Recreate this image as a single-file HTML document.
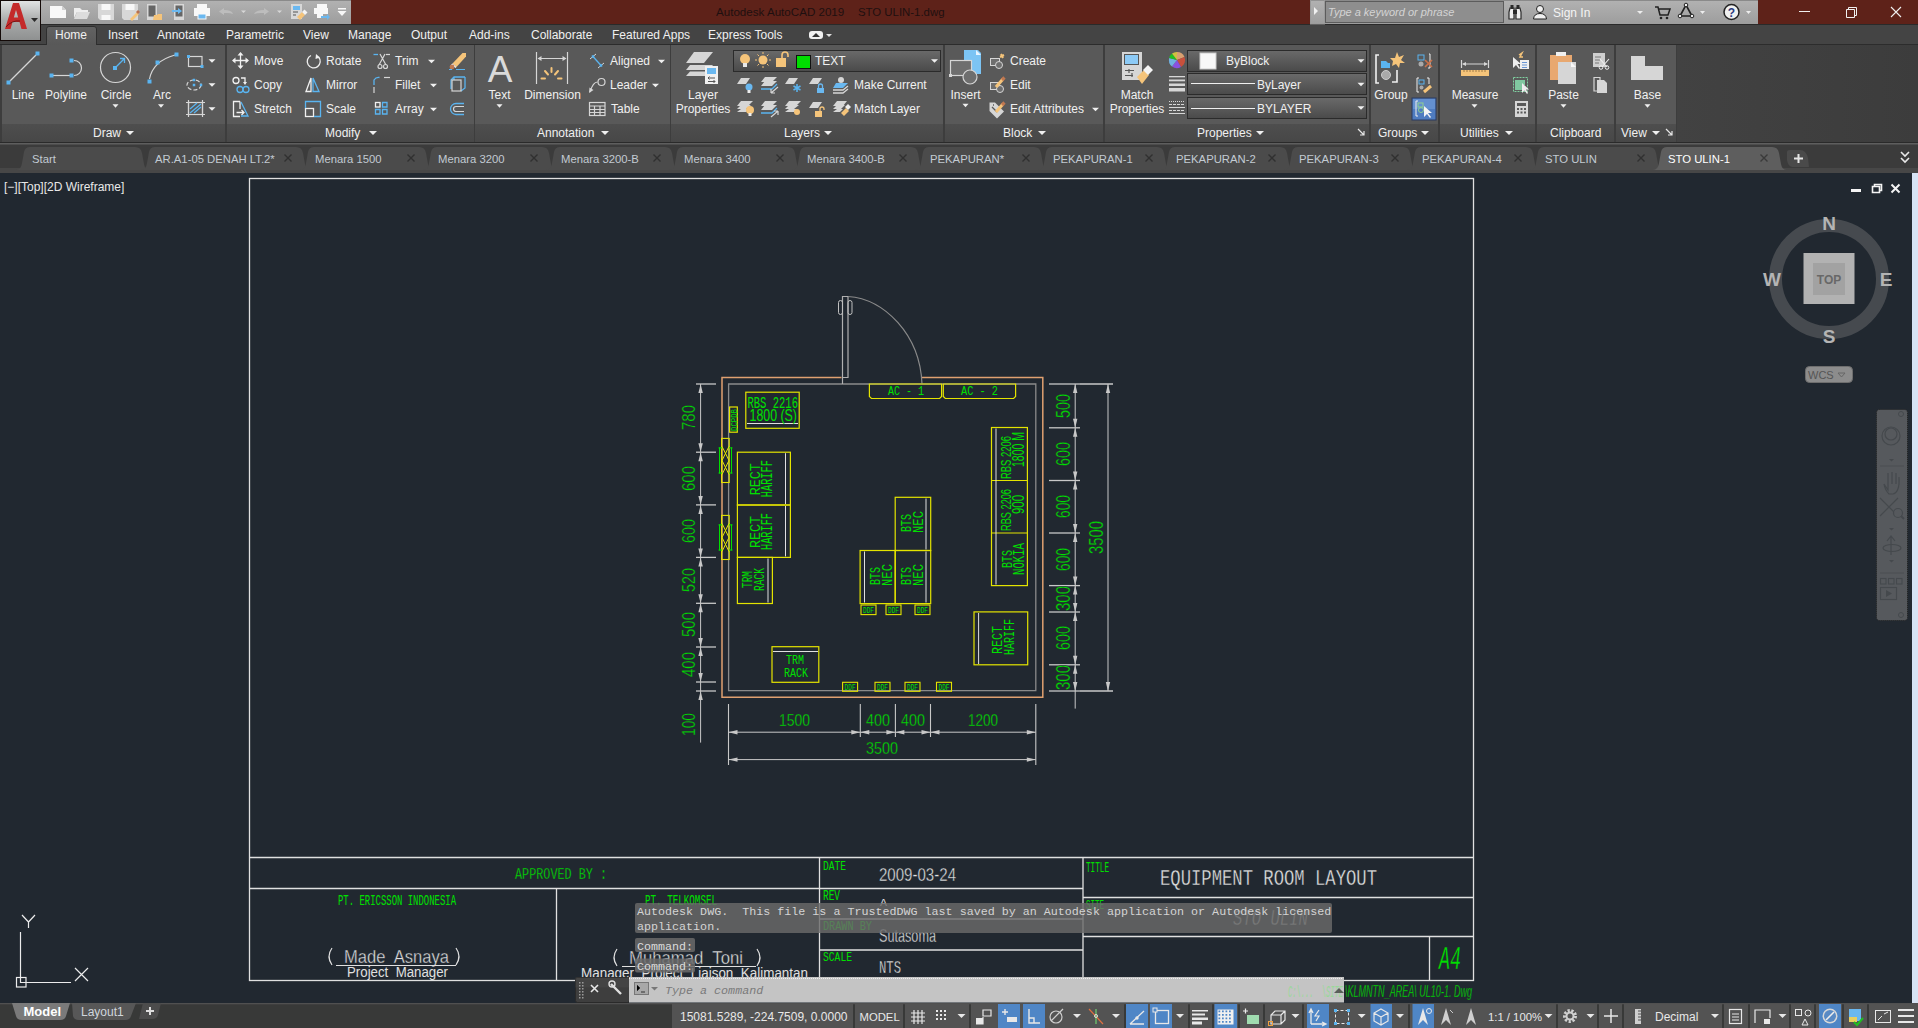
<!DOCTYPE html>
<html><head><meta charset="utf-8">
<style>
*{margin:0;padding:0}
html,body{width:1918px;height:1028px;overflow:hidden;background:#212830;font-family:"Liberation Sans",sans-serif}
svg{position:absolute;left:0;top:0;display:block}

</style></head><body>
<svg width="1918" height="1028" viewBox="0 0 1918 1028" font-family="Liberation Sans">
<g font-family="Liberation Mono">
<g stroke="#e0e0e0" stroke-width="1.3" fill="none">
<rect x="249.5" y="178.5" width="1224" height="802"/>
<path d="M249.5 857.5 H1473.5 M249.5 888.5 H819.5 M556.5 888.5 V980.5 M819.5 857.5 V980.5 M819.5 888.5 H1083 M819.5 919 H1083 M819.5 950 H1083 M1083 857.5 V980.5 M1083 897.5 H1473.5 M1083 936.5 H1473.5 M1429.5 936.5 V980.5"/>
</g>
<text x="515" y="879" font-size="17.14" fill="#00e000" font-family="Liberation Mono" textLength="92" lengthAdjust="spacingAndGlyphs" xml:space="preserve" stroke="#212830" stroke-width="0.35">APPROVED BY :</text>
<text x="338" y="905" font-size="14.29" fill="#00e000" font-family="Liberation Mono" textLength="118" lengthAdjust="spacingAndGlyphs" xml:space="preserve" stroke="#212830" stroke-width="0">PT. ERICSSON INDONESIA</text>
<text x="645" y="905" font-size="14.29" fill="#00e000" font-family="Liberation Mono" textLength="72" lengthAdjust="spacingAndGlyphs" xml:space="preserve" stroke="#212830" stroke-width="0">PT. TELKOMSEL</text>
<text x="344" y="962.5" font-size="17.86" fill="#e0e0e0" font-family="Liberation Sans" textLength="105" lengthAdjust="spacingAndGlyphs" xml:space="preserve" stroke="#212830" stroke-width="0.35">Made  Asnaya</text>
<path d="M332 948 Q326 956.5 332 965 M456 948 Q462 956.5 456 965" stroke="#e0e0e0" stroke-width="1.2" fill="none"/>
<line x1="336" y1="965.5" x2="456" y2="965.5" stroke="#e0e0e0" stroke-width="1"/>
<text x="347" y="977" font-size="14.29" fill="#e0e0e0" font-family="Liberation Sans" textLength="101" lengthAdjust="spacingAndGlyphs" xml:space="preserve" stroke="#212830" stroke-width="0">Project  Manager</text>
<text x="629" y="963.5" font-size="17.86" fill="#e0e0e0" font-family="Liberation Sans" textLength="114" lengthAdjust="spacingAndGlyphs" xml:space="preserve" stroke="#212830" stroke-width="0.35">Muhamad  Toni</text>
<path d="M617 949 Q611 957.5 617 966 M757 949 Q763 957.5 757 966" stroke="#e0e0e0" stroke-width="1.2" fill="none"/>
<line x1="622" y1="966.5" x2="756" y2="966.5" stroke="#e0e0e0" stroke-width="1"/>
<text x="581" y="978" font-size="14.29" fill="#e0e0e0" font-family="Liberation Sans" textLength="227" lengthAdjust="spacingAndGlyphs" xml:space="preserve" stroke="#212830" stroke-width="0">Manager  Project  Liaison  Kalimantan</text>
<text x="823" y="870" font-size="12.86" fill="#00e000" font-family="Liberation Mono" textLength="23" lengthAdjust="spacingAndGlyphs" xml:space="preserve" stroke="#212830" stroke-width="0">DATE</text>
<text x="879" y="881" font-size="18.57" fill="#e0e0e0" font-family="Liberation Sans" textLength="77" lengthAdjust="spacingAndGlyphs" xml:space="preserve" stroke="#212830" stroke-width="0.35">2009-03-24</text>
<text x="823" y="900" font-size="14.29" fill="#00e000" font-family="Liberation Mono" textLength="17" lengthAdjust="spacingAndGlyphs" xml:space="preserve" stroke="#212830" stroke-width="0">REV</text>
<text x="880" y="906" font-size="10.00" fill="#e0e0e0" font-family="Liberation Mono" textLength="7" lengthAdjust="spacingAndGlyphs" xml:space="preserve" stroke="#212830" stroke-width="0">A</text>
<text x="823" y="930" font-size="12.86" fill="#00e000" font-family="Liberation Mono" textLength="49" lengthAdjust="spacingAndGlyphs" xml:space="preserve" stroke="#212830" stroke-width="0">DRAWN BY</text>
<text x="879" y="942" font-size="18.57" fill="#e0e0e0" font-family="Liberation Sans" textLength="57" lengthAdjust="spacingAndGlyphs" xml:space="preserve" stroke="#212830" stroke-width="0.35">Sutasoma</text>
<text x="823" y="961" font-size="12.86" fill="#00e000" font-family="Liberation Mono" textLength="29" lengthAdjust="spacingAndGlyphs" xml:space="preserve" stroke="#212830" stroke-width="0">SCALE</text>
<text x="879" y="973" font-size="18.57" fill="#e0e0e0" font-family="Liberation Mono" textLength="22" lengthAdjust="spacingAndGlyphs" xml:space="preserve" stroke="#212830" stroke-width="0.35">NTS</text>
<text x="1086" y="872" font-size="14.29" fill="#00e000" font-family="Liberation Mono" textLength="23" lengthAdjust="spacingAndGlyphs" xml:space="preserve" stroke="#212830" stroke-width="0">TITLE</text>
<text x="1160" y="885" font-size="22.86" fill="#e0e0e0" font-family="Liberation Mono" textLength="217" lengthAdjust="spacingAndGlyphs" xml:space="preserve" stroke="#212830" stroke-width="0.35">EQUIPMENT ROOM LAYOUT</text>
<text x="1086" y="909" font-size="12.86" fill="#00e000" font-family="Liberation Mono" textLength="18" lengthAdjust="spacingAndGlyphs" xml:space="preserve" stroke="#212830" stroke-width="0">SITE</text>
<text x="1233" y="925" font-size="21.43" fill="#b8b8b8" font-family="Liberation Mono" textLength="75" lengthAdjust="spacingAndGlyphs" xml:space="preserve" stroke="#212830" stroke-width="0.35" font-style="italic">STO ULIN</text>
<text x="1439" y="969" font-size="32.86" fill="#00e000" font-family="Liberation Mono" textLength="22" lengthAdjust="spacingAndGlyphs" xml:space="preserve" stroke="#212830" stroke-width="0.35" font-style="italic">A4</text>
<text x="1345" y="997" font-size="17.14" fill="#00e000" font-family="Liberation Sans" textLength="127" lengthAdjust="spacingAndGlyphs" xml:space="preserve" stroke="#212830" stroke-width="0.35" font-style="italic">\KLMNTN_AREA\ UL10-1. Dwg</text>
<path d="M841.5 377.5 H722 V697.2 H1042.8 V377.5 H922" stroke="#e0a070" stroke-width="1.5" fill="none"/>
<path d="M842 384 H728.6 V690.7 H1035.8 V384 H842" stroke="#8a8a8a" stroke-width="1.3" fill="none"/>
<path d="M842.5 384 V296.5 H848 V377.5 H842.5" fill="none" stroke="#b0b0b0" stroke-width="1.2"/>
<rect x="838.5" y="300.5" width="4" height="14" rx="2" fill="none" stroke="#c0c0c0" stroke-width="1"/><rect x="848" y="300.5" width="4" height="14" rx="2" fill="none" stroke="#c0c0c0" stroke-width="1"/>
<path d="M848 296.5 C884 299 920 334 922 384" stroke="#8a8a8a" stroke-width="1.2" fill="none"/>
<path d="M869.4 384 V396.5 L871.4 398.5 H939.6 L941.6 396.5 V384 Z" fill="none" stroke="#e4e400" stroke-width="1.2"/>
<path d="M943.3 384 V396.5 L945.3 398.5 H1013.6 L1015.6 396.5 V384 Z" fill="none" stroke="#e4e400" stroke-width="1.2"/>
<text x="888" y="395" font-size="13.57" fill="#00e000" font-family="Liberation Mono" textLength="36" lengthAdjust="spacingAndGlyphs" xml:space="preserve" stroke="#212830" stroke-width="0">AC - 1</text>
<text x="961" y="395" font-size="13.57" fill="#00e000" font-family="Liberation Mono" textLength="37" lengthAdjust="spacingAndGlyphs" xml:space="preserve" stroke="#212830" stroke-width="0">AC - 2</text>
<rect x="745.8" y="392.2" width="53.40000000000009" height="36.10000000000002" fill="none" stroke="#e4e400" stroke-width="1.2"/>
<line x1="747" y1="423.5" x2="798" y2="423.5" stroke="#e0e0e0" stroke-width="1"/>
<text x="747.5" y="408" font-size="15.71" fill="#00e000" font-family="Liberation Mono" textLength="50.5" lengthAdjust="spacingAndGlyphs" xml:space="preserve" stroke="#212830" stroke-width="0">RBS 2216</text>
<text x="749.5" y="420.5" font-size="15.71" fill="#00e000" font-family="Liberation Sans" textLength="47.5" lengthAdjust="spacingAndGlyphs" xml:space="preserve" stroke="#212830" stroke-width="0">1800 (S)</text>
<rect x="729.6" y="407" width="7.699999999999932" height="25.19999999999999" fill="none" stroke="#e4e400" stroke-width="1.2"/>
<text transform="translate(736.5,431) rotate(-90)" x="0" y="0" font-size="8.57" fill="#00e000" font-family="Liberation Mono" textLength="22" lengthAdjust="spacingAndGlyphs" stroke="#212830" stroke-width="0">DCPDB</text>
<rect x="721.6" y="438.4" width="7.600000000000023" height="44.10000000000002" fill="none" stroke="#e4e400" stroke-width="1.1"/>
<path d="M722 446.4 L729 460.45 L722 474.5 M729 446.4 L722 460.45 L729 474.5" stroke="#e4e400" stroke-width="1" fill="none"/>
<path d="M719.5 447.4 V473.5 M731.5 447.4 V473.5 M718.5 447.9 H722 M718.5 473.0 H722 M729 447.9 H732.5 M729 473.0 H732.5" stroke="#00e000" stroke-width="1" fill="none"/>
<rect x="721.6" y="515.4" width="7.600000000000023" height="44.10000000000002" fill="none" stroke="#e4e400" stroke-width="1.1"/>
<path d="M722 523.4 L729 537.45 L722 551.5 M729 523.4 L722 537.45 L729 551.5" stroke="#e4e400" stroke-width="1" fill="none"/>
<path d="M719.5 524.4 V550.5 M731.5 524.4 V550.5 M718.5 524.9 H722 M718.5 550.0 H722 M729 524.9 H732.5 M729 550.0 H732.5" stroke="#00e000" stroke-width="1" fill="none"/>
<rect x="737.4" y="452.2" width="53.0" height="52.80000000000001" fill="none" stroke="#e4e400" stroke-width="1.2"/>
<line x1="785.5" y1="453.2" x2="785.5" y2="504" stroke="#e0e0e0" stroke-width="1"/>
<text transform="translate(760,495.2) rotate(-90)" x="0" y="0" font-size="14.29" fill="#00e000" font-family="Liberation Mono" textLength="32.0" lengthAdjust="spacingAndGlyphs" stroke="#212830" stroke-width="0">RECT</text>
<text transform="translate(772,497.2) rotate(-90)" x="0" y="0" font-size="15.71" fill="#00e000" font-family="Liberation Mono" textLength="37.0" lengthAdjust="spacingAndGlyphs" stroke="#212830" stroke-width="0">HARIFF</text>
<rect x="737.4" y="505" width="53.0" height="52.39999999999998" fill="none" stroke="#e4e400" stroke-width="1.2"/>
<line x1="785.5" y1="506" x2="785.5" y2="556.4" stroke="#e0e0e0" stroke-width="1"/>
<text transform="translate(760,548) rotate(-90)" x="0" y="0" font-size="14.29" fill="#00e000" font-family="Liberation Mono" textLength="32" lengthAdjust="spacingAndGlyphs" stroke="#212830" stroke-width="0">RECT</text>
<text transform="translate(772,550) rotate(-90)" x="0" y="0" font-size="15.71" fill="#00e000" font-family="Liberation Mono" textLength="37" lengthAdjust="spacingAndGlyphs" stroke="#212830" stroke-width="0">HARIFF</text>
<rect x="737.4" y="557.4" width="35.0" height="46.10000000000002" fill="none" stroke="#e4e400" stroke-width="1.2"/>
<line x1="768" y1="558.5" x2="768" y2="602.5" stroke="#e0e0e0" stroke-width="1"/>
<text transform="translate(752,588) rotate(-90)" x="0" y="0" font-size="14.29" fill="#00e000" font-family="Liberation Mono" textLength="17" lengthAdjust="spacingAndGlyphs" stroke="#212830" stroke-width="0">TRM</text>
<text transform="translate(764,591) rotate(-90)" x="0" y="0" font-size="14.29" fill="#00e000" font-family="Liberation Mono" textLength="23" lengthAdjust="spacingAndGlyphs" stroke="#212830" stroke-width="0">RACK</text>
<rect x="895.2" y="497.3" width="35.5" height="53.19999999999999" fill="none" stroke="#e4e400" stroke-width="1.2"/>
<line x1="926" y1="498.5" x2="926" y2="549.5" stroke="#e0e0e0" stroke-width="1"/>
<text transform="translate(911,532) rotate(-90)" x="0" y="0" font-size="14.29" fill="#00e000" font-family="Liberation Mono" textLength="18" lengthAdjust="spacingAndGlyphs" stroke="#212830" stroke-width="0">BTS</text>
<text transform="translate(923,533) rotate(-90)" x="0" y="0" font-size="14.29" fill="#00e000" font-family="Liberation Mono" textLength="22" lengthAdjust="spacingAndGlyphs" stroke="#212830" stroke-width="0">NEC</text>
<rect x="860.1" y="550.5" width="35.10000000000002" height="53.10000000000002" fill="none" stroke="#e4e400" stroke-width="1.2"/>
<line x1="864.5" y1="551.5" x2="864.5" y2="602.5" stroke="#e0e0e0" stroke-width="1"/>
<text transform="translate(880,585) rotate(-90)" x="0" y="0" font-size="14.29" fill="#00e000" font-family="Liberation Mono" textLength="18" lengthAdjust="spacingAndGlyphs" stroke="#212830" stroke-width="0">BTS</text>
<text transform="translate(892,586) rotate(-90)" x="0" y="0" font-size="14.29" fill="#00e000" font-family="Liberation Mono" textLength="22" lengthAdjust="spacingAndGlyphs" stroke="#212830" stroke-width="0">NEC</text>
<rect x="895.2" y="550.5" width="35.5" height="53.10000000000002" fill="none" stroke="#e4e400" stroke-width="1.2"/>
<line x1="926" y1="551.5" x2="926" y2="602.5" stroke="#e0e0e0" stroke-width="1"/>
<text transform="translate(911,585) rotate(-90)" x="0" y="0" font-size="14.29" fill="#00e000" font-family="Liberation Mono" textLength="18" lengthAdjust="spacingAndGlyphs" stroke="#212830" stroke-width="0">BTS</text>
<text transform="translate(923,586) rotate(-90)" x="0" y="0" font-size="14.29" fill="#00e000" font-family="Liberation Mono" textLength="22" lengthAdjust="spacingAndGlyphs" stroke="#212830" stroke-width="0">NEC</text>
<rect x="861" y="605" width="15" height="9.600000000000023" fill="none" stroke="#e4e400" stroke-width="1.1"/>
<text x="863" y="613" font-size="9.29" fill="#00e000" font-family="Liberation Mono" textLength="11" lengthAdjust="spacingAndGlyphs" xml:space="preserve" stroke="#212830" stroke-width="0">DDF</text>
<rect x="886" y="605" width="15" height="9.600000000000023" fill="none" stroke="#e4e400" stroke-width="1.1"/>
<text x="888" y="613" font-size="9.29" fill="#00e000" font-family="Liberation Mono" textLength="11" lengthAdjust="spacingAndGlyphs" xml:space="preserve" stroke="#212830" stroke-width="0">DDF</text>
<rect x="915" y="605" width="15" height="9.600000000000023" fill="none" stroke="#e4e400" stroke-width="1.1"/>
<text x="917" y="613" font-size="9.29" fill="#00e000" font-family="Liberation Mono" textLength="11" lengthAdjust="spacingAndGlyphs" xml:space="preserve" stroke="#212830" stroke-width="0">DDF</text>
<rect x="842.6" y="682.3" width="15.0" height="9.0" fill="none" stroke="#e4e400" stroke-width="1.1"/>
<text x="844.6" y="690" font-size="9.29" fill="#00e000" font-family="Liberation Mono" textLength="11.0" lengthAdjust="spacingAndGlyphs" xml:space="preserve" stroke="#212830" stroke-width="0">DDF</text>
<rect x="875" y="682.3" width="15" height="9.0" fill="none" stroke="#e4e400" stroke-width="1.1"/>
<text x="877" y="690" font-size="9.29" fill="#00e000" font-family="Liberation Mono" textLength="11" lengthAdjust="spacingAndGlyphs" xml:space="preserve" stroke="#212830" stroke-width="0">DDF</text>
<rect x="905" y="682.3" width="15" height="9.0" fill="none" stroke="#e4e400" stroke-width="1.1"/>
<text x="907" y="690" font-size="9.29" fill="#00e000" font-family="Liberation Mono" textLength="11" lengthAdjust="spacingAndGlyphs" xml:space="preserve" stroke="#212830" stroke-width="0">DDF</text>
<rect x="936.5" y="682.3" width="15.0" height="9.0" fill="none" stroke="#e4e400" stroke-width="1.1"/>
<text x="938.5" y="690" font-size="9.29" fill="#00e000" font-family="Liberation Mono" textLength="11.0" lengthAdjust="spacingAndGlyphs" xml:space="preserve" stroke="#212830" stroke-width="0">DDF</text>
<rect x="991.5" y="427.5" width="35.90000000000009" height="158.10000000000002" fill="none" stroke="#e4e400" stroke-width="1.2"/>
<line x1="991.5" y1="480.5" x2="1027.4" y2="480.5" stroke="#e4e400" stroke-width="1.2"/>
<line x1="991.5" y1="533" x2="1027.4" y2="533" stroke="#e4e400" stroke-width="1.2"/>
<line x1="996" y1="428.5" x2="996" y2="584.5" stroke="#e0e0e0" stroke-width="1"/>
<text transform="translate(1011,479) rotate(-90)" x="0" y="0" font-size="14.29" fill="#00e000" font-family="Liberation Sans" textLength="43" lengthAdjust="spacingAndGlyphs" stroke="#212830" stroke-width="0">RBS 2206</text>
<text transform="translate(1024,467) rotate(-90)" x="0" y="0" font-size="15.71" fill="#00e000" font-family="Liberation Sans" textLength="35" lengthAdjust="spacingAndGlyphs" stroke="#212830" stroke-width="0">1800 M</text>
<text transform="translate(1011,531) rotate(-90)" x="0" y="0" font-size="14.29" fill="#00e000" font-family="Liberation Sans" textLength="42" lengthAdjust="spacingAndGlyphs" stroke="#212830" stroke-width="0">RBS 2206</text>
<text transform="translate(1024,514) rotate(-90)" x="0" y="0" font-size="15.71" fill="#00e000" font-family="Liberation Sans" textLength="19" lengthAdjust="spacingAndGlyphs" stroke="#212830" stroke-width="0">900</text>
<text transform="translate(1012,568) rotate(-90)" x="0" y="0" font-size="14.29" fill="#00e000" font-family="Liberation Mono" textLength="18" lengthAdjust="spacingAndGlyphs" stroke="#212830" stroke-width="0">BTS</text>
<text transform="translate(1024,575) rotate(-90)" x="0" y="0" font-size="15.71" fill="#00e000" font-family="Liberation Mono" textLength="32" lengthAdjust="spacingAndGlyphs" stroke="#212830" stroke-width="0">NOKIA</text>
<rect x="974" y="611.9" width="53.700000000000045" height="52.89999999999998" fill="none" stroke="#e4e400" stroke-width="1.2"/>
<line x1="978.6" y1="613" x2="978.6" y2="664" stroke="#e0e0e0" stroke-width="1"/>
<text transform="translate(1002,654) rotate(-90)" x="0" y="0" font-size="14.29" fill="#00e000" font-family="Liberation Mono" textLength="28" lengthAdjust="spacingAndGlyphs" stroke="#212830" stroke-width="0">RECT</text>
<text transform="translate(1014,655) rotate(-90)" x="0" y="0" font-size="14.29" fill="#00e000" font-family="Liberation Mono" textLength="36" lengthAdjust="spacingAndGlyphs" stroke="#212830" stroke-width="0">HARIFF</text>
<rect x="772" y="646.7" width="46.799999999999955" height="35.59999999999991" fill="none" stroke="#e4e400" stroke-width="1.2"/>
<line x1="773" y1="651.5" x2="818" y2="651.5" stroke="#e0e0e0" stroke-width="1"/>
<text x="786" y="664" font-size="12.86" fill="#00e000" font-family="Liberation Mono" textLength="18" lengthAdjust="spacingAndGlyphs" xml:space="preserve" stroke="#212830" stroke-width="0">TRM</text>
<text x="784" y="677" font-size="12.86" fill="#00e000" font-family="Liberation Mono" textLength="24" lengthAdjust="spacingAndGlyphs" xml:space="preserve" stroke="#212830" stroke-width="0">RACK</text>
<line x1="700.6" y1="384" x2="700.6" y2="742.6" stroke="#c8c8c8" stroke-width="1"/>
<line x1="696" y1="384" x2="716" y2="384" stroke="#c8c8c8" stroke-width="1.3"/>
<line x1="696" y1="452.2" x2="716" y2="452.2" stroke="#c8c8c8" stroke-width="1.3"/>
<line x1="696" y1="504.9" x2="716" y2="504.9" stroke="#c8c8c8" stroke-width="1.3"/>
<line x1="696" y1="557.4" x2="716" y2="557.4" stroke="#c8c8c8" stroke-width="1.3"/>
<line x1="696" y1="603.3" x2="716" y2="603.3" stroke="#c8c8c8" stroke-width="1.3"/>
<line x1="696" y1="647" x2="716" y2="647" stroke="#c8c8c8" stroke-width="1.3"/>
<line x1="696" y1="682" x2="716" y2="682" stroke="#c8c8c8" stroke-width="1.3"/>
<line x1="696" y1="691" x2="716" y2="691" stroke="#c8c8c8" stroke-width="1.3"/>
<path d="M700.6 384 L698.4 393 L702.8000000000001 393Z" fill="#c8c8c8"/>
<path d="M700.6 452.2 L698.4 443.2 L702.8000000000001 443.2Z" fill="#c8c8c8"/>
<path d="M700.6 452.2 L698.4 461.2 L702.8000000000001 461.2Z" fill="#c8c8c8"/>
<path d="M700.6 504.9 L698.4 495.9 L702.8000000000001 495.9Z" fill="#c8c8c8"/>
<path d="M700.6 504.9 L698.4 513.9 L702.8000000000001 513.9Z" fill="#c8c8c8"/>
<path d="M700.6 557.4 L698.4 548.4 L702.8000000000001 548.4Z" fill="#c8c8c8"/>
<path d="M700.6 557.4 L698.4 566.4 L702.8000000000001 566.4Z" fill="#c8c8c8"/>
<path d="M700.6 603.3 L698.4 594.3 L702.8000000000001 594.3Z" fill="#c8c8c8"/>
<path d="M700.6 603.3 L698.4 612.3 L702.8000000000001 612.3Z" fill="#c8c8c8"/>
<path d="M700.6 647 L698.4 638 L702.8000000000001 638Z" fill="#c8c8c8"/>
<path d="M700.6 647 L698.4 656 L702.8000000000001 656Z" fill="#c8c8c8"/>
<path d="M700.6 682 L698.4 673 L702.8000000000001 673Z" fill="#c8c8c8"/>
<path d="M700.6 691 L698.4 700 L702.8000000000001 700Z" fill="#c8c8c8"/>
<text transform="translate(695,430) rotate(-90)" x="0" y="0" font-size="18.57" fill="#00e000" font-family="Liberation Sans" textLength="25" lengthAdjust="spacingAndGlyphs" stroke="#212830" stroke-width="0.35">780</text>
<text transform="translate(695,491) rotate(-90)" x="0" y="0" font-size="18.57" fill="#00e000" font-family="Liberation Sans" textLength="25" lengthAdjust="spacingAndGlyphs" stroke="#212830" stroke-width="0.35">600</text>
<text transform="translate(695,543) rotate(-90)" x="0" y="0" font-size="18.57" fill="#00e000" font-family="Liberation Sans" textLength="24" lengthAdjust="spacingAndGlyphs" stroke="#212830" stroke-width="0.35">600</text>
<text transform="translate(695,592) rotate(-90)" x="0" y="0" font-size="18.57" fill="#00e000" font-family="Liberation Sans" textLength="24" lengthAdjust="spacingAndGlyphs" stroke="#212830" stroke-width="0.35">520</text>
<text transform="translate(695,637) rotate(-90)" x="0" y="0" font-size="18.57" fill="#00e000" font-family="Liberation Sans" textLength="25" lengthAdjust="spacingAndGlyphs" stroke="#212830" stroke-width="0.35">500</text>
<text transform="translate(695,677) rotate(-90)" x="0" y="0" font-size="18.57" fill="#00e000" font-family="Liberation Sans" textLength="25" lengthAdjust="spacingAndGlyphs" stroke="#212830" stroke-width="0.35">400</text>
<text transform="translate(695,736) rotate(-90)" x="0" y="0" font-size="18.57" fill="#00e000" font-family="Liberation Sans" textLength="23" lengthAdjust="spacingAndGlyphs" stroke="#212830" stroke-width="0.35">100</text>
<line x1="1075.2" y1="384" x2="1075.2" y2="708.6" stroke="#c8c8c8" stroke-width="1"/>
<line x1="1108" y1="384" x2="1108" y2="691" stroke="#c8c8c8" stroke-width="1"/>
<line x1="1049" y1="384" x2="1080" y2="384" stroke="#c8c8c8" stroke-width="1.3"/>
<line x1="1049" y1="427.8" x2="1080" y2="427.8" stroke="#c8c8c8" stroke-width="1.3"/>
<line x1="1049" y1="480.5" x2="1080" y2="480.5" stroke="#c8c8c8" stroke-width="1.3"/>
<line x1="1049" y1="533" x2="1080" y2="533" stroke="#c8c8c8" stroke-width="1.3"/>
<line x1="1049" y1="585.6" x2="1080" y2="585.6" stroke="#c8c8c8" stroke-width="1.3"/>
<line x1="1049" y1="612" x2="1080" y2="612" stroke="#c8c8c8" stroke-width="1.3"/>
<line x1="1049" y1="664.8" x2="1080" y2="664.8" stroke="#c8c8c8" stroke-width="1.3"/>
<line x1="1049" y1="691" x2="1080" y2="691" stroke="#c8c8c8" stroke-width="1.3"/>
<line x1="1080" y1="384" x2="1113" y2="384" stroke="#c8c8c8" stroke-width="1.3"/>
<line x1="1080" y1="691" x2="1113" y2="691" stroke="#c8c8c8" stroke-width="1.3"/>
<path d="M1075.2 384 L1073.0 393 L1077.4 393Z" fill="#c8c8c8"/>
<path d="M1075.2 427.8 L1073.0 418.8 L1077.4 418.8Z" fill="#c8c8c8"/>
<path d="M1075.2 427.8 L1073.0 436.8 L1077.4 436.8Z" fill="#c8c8c8"/>
<path d="M1075.2 480.5 L1073.0 471.5 L1077.4 471.5Z" fill="#c8c8c8"/>
<path d="M1075.2 480.5 L1073.0 489.5 L1077.4 489.5Z" fill="#c8c8c8"/>
<path d="M1075.2 533 L1073.0 524 L1077.4 524Z" fill="#c8c8c8"/>
<path d="M1075.2 533 L1073.0 542 L1077.4 542Z" fill="#c8c8c8"/>
<path d="M1075.2 585.6 L1073.0 576.6 L1077.4 576.6Z" fill="#c8c8c8"/>
<path d="M1075.2 585.6 L1073.0 594.6 L1077.4 594.6Z" fill="#c8c8c8"/>
<path d="M1075.2 612 L1073.0 603 L1077.4 603Z" fill="#c8c8c8"/>
<path d="M1075.2 612 L1073.0 621 L1077.4 621Z" fill="#c8c8c8"/>
<path d="M1075.2 664.8 L1073.0 655.8 L1077.4 655.8Z" fill="#c8c8c8"/>
<path d="M1075.2 664.8 L1073.0 673.8 L1077.4 673.8Z" fill="#c8c8c8"/>
<path d="M1075.2 691 L1073.0 682 L1077.4 682Z" fill="#c8c8c8"/>
<path d="M1108 384 L1105.8 393 L1110.2 393Z" fill="#c8c8c8"/>
<path d="M1108 691 L1105.8 682 L1110.2 682Z" fill="#c8c8c8"/>
<text transform="translate(1070,418) rotate(-90)" x="0" y="0" font-size="20.00" fill="#00e000" font-family="Liberation Sans" textLength="24" lengthAdjust="spacingAndGlyphs" stroke="#212830" stroke-width="0.35">500</text>
<text transform="translate(1070,466) rotate(-90)" x="0" y="0" font-size="20.00" fill="#00e000" font-family="Liberation Sans" textLength="24" lengthAdjust="spacingAndGlyphs" stroke="#212830" stroke-width="0.35">600</text>
<text transform="translate(1070,518) rotate(-90)" x="0" y="0" font-size="20.00" fill="#00e000" font-family="Liberation Sans" textLength="23" lengthAdjust="spacingAndGlyphs" stroke="#212830" stroke-width="0.35">600</text>
<text transform="translate(1070,571) rotate(-90)" x="0" y="0" font-size="20.00" fill="#00e000" font-family="Liberation Sans" textLength="23" lengthAdjust="spacingAndGlyphs" stroke="#212830" stroke-width="0.35">600</text>
<text transform="translate(1070,611) rotate(-90)" x="0" y="0" font-size="20.00" fill="#00e000" font-family="Liberation Sans" textLength="25" lengthAdjust="spacingAndGlyphs" stroke="#212830" stroke-width="0.35">300</text>
<text transform="translate(1070,650) rotate(-90)" x="0" y="0" font-size="20.00" fill="#00e000" font-family="Liberation Sans" textLength="24" lengthAdjust="spacingAndGlyphs" stroke="#212830" stroke-width="0.35">600</text>
<text transform="translate(1070,690) rotate(-90)" x="0" y="0" font-size="20.00" fill="#00e000" font-family="Liberation Sans" textLength="25" lengthAdjust="spacingAndGlyphs" stroke="#212830" stroke-width="0.35">300</text>
<text transform="translate(1103,554) rotate(-90)" x="0" y="0" font-size="20.00" fill="#00e000" font-family="Liberation Sans" textLength="33" lengthAdjust="spacingAndGlyphs" stroke="#212830" stroke-width="0.35">3500</text>
<line x1="728.5" y1="704" x2="728.5" y2="765" stroke="#c8c8c8" stroke-width="1.1"/>
<line x1="860.3" y1="704" x2="860.3" y2="737" stroke="#c8c8c8" stroke-width="1.1"/>
<line x1="895.4" y1="704" x2="895.4" y2="737" stroke="#c8c8c8" stroke-width="1.1"/>
<line x1="930.5" y1="704" x2="930.5" y2="737" stroke="#c8c8c8" stroke-width="1.1"/>
<line x1="1035.8" y1="704" x2="1035.8" y2="765" stroke="#c8c8c8" stroke-width="1.1"/>
<line x1="728.5" y1="732.2" x2="1035.8" y2="732.2" stroke="#c8c8c8" stroke-width="1"/>
<path d="M728.5 732.2 L737.5 730.0 L737.5 734.4000000000001Z" fill="#c8c8c8"/>
<path d="M860.3 732.2 L851.3 730.0 L851.3 734.4000000000001Z" fill="#c8c8c8"/>
<path d="M860.3 732.2 L869.3 730.0 L869.3 734.4000000000001Z" fill="#c8c8c8"/>
<path d="M895.4 732.2 L886.4 730.0 L886.4 734.4000000000001Z" fill="#c8c8c8"/>
<path d="M895.4 732.2 L904.4 730.0 L904.4 734.4000000000001Z" fill="#c8c8c8"/>
<path d="M930.5 732.2 L921.5 730.0 L921.5 734.4000000000001Z" fill="#c8c8c8"/>
<path d="M930.5 732.2 L939.5 730.0 L939.5 734.4000000000001Z" fill="#c8c8c8"/>
<path d="M1035.8 732.2 L1026.8 730.0 L1026.8 734.4000000000001Z" fill="#c8c8c8"/>
<line x1="728.5" y1="759.6" x2="1035.8" y2="759.6" stroke="#c8c8c8" stroke-width="1"/>
<path d="M728.5 759.6 L737.5 757.4 L737.5 761.8000000000001Z" fill="#c8c8c8"/>
<path d="M1035.8 759.6 L1026.8 757.4 L1026.8 761.8000000000001Z" fill="#c8c8c8"/>
<text x="779" y="726" font-size="17.14" fill="#00e000" font-family="Liberation Sans" textLength="31" lengthAdjust="spacingAndGlyphs" xml:space="preserve" stroke="#212830" stroke-width="0.35">1500</text>
<text x="866" y="726" font-size="17.14" fill="#00e000" font-family="Liberation Sans" textLength="24" lengthAdjust="spacingAndGlyphs" xml:space="preserve" stroke="#212830" stroke-width="0.35">400</text>
<text x="901" y="726" font-size="17.14" fill="#00e000" font-family="Liberation Sans" textLength="24" lengthAdjust="spacingAndGlyphs" xml:space="preserve" stroke="#212830" stroke-width="0.35">400</text>
<text x="968" y="726" font-size="17.14" fill="#00e000" font-family="Liberation Sans" textLength="30" lengthAdjust="spacingAndGlyphs" xml:space="preserve" stroke="#212830" stroke-width="0.35">1200</text>
<text x="866" y="754" font-size="17.14" fill="#00e000" font-family="Liberation Sans" textLength="32" lengthAdjust="spacingAndGlyphs" xml:space="preserve" stroke="#212830" stroke-width="0.35">3500</text>
</g>
<rect x="0" y="144" width="1918" height="29" fill="#3b3b3b"/><rect x="0" y="168" width="1918" height="5" fill="#474747"/>
<path d="M16 170 Q21 170 22 163 L24 152 Q25 147 30 147 H135 Q141 147 142 153 L144 164 Q145 170 150 170 Z" fill="#4b4b4b"/>
<path d="M141 170 Q146 170 147 163 L149 152 Q150 147 155 147 H296 Q302 147 303 153 L305 164 Q306 170 311 170 Z" fill="#4b4b4b"/>
<path d="M300 170 Q305 170 306 163 L308 152 Q309 147 314 147 H419 Q425 147 426 153 L428 164 Q429 170 434 170 Z" fill="#4b4b4b"/>
<path d="M423 170 Q428 170 429 163 L431 152 Q432 147 437 147 H542 Q548 147 549 153 L551 164 Q552 170 557 170 Z" fill="#4b4b4b"/>
<path d="M546 170 Q551 170 552 163 L554 152 Q555 147 560 147 H665 Q671 147 672 153 L674 164 Q675 170 680 170 Z" fill="#4b4b4b"/>
<path d="M669 170 Q674 170 675 163 L677 152 Q678 147 683 147 H788 Q794 147 795 153 L797 164 Q798 170 803 170 Z" fill="#4b4b4b"/>
<path d="M792 170 Q797 170 798 163 L800 152 Q801 147 806 147 H911 Q917 147 918 153 L920 164 Q921 170 926 170 Z" fill="#4b4b4b"/>
<path d="M915 170 Q920 170 921 163 L923 152 Q924 147 929 147 H1034 Q1040 147 1041 153 L1043 164 Q1044 170 1049 170 Z" fill="#4b4b4b"/>
<path d="M1038 170 Q1043 170 1044 163 L1046 152 Q1047 147 1052 147 H1157 Q1163 147 1164 153 L1166 164 Q1167 170 1172 170 Z" fill="#4b4b4b"/>
<path d="M1161 170 Q1166 170 1167 163 L1169 152 Q1170 147 1175 147 H1280 Q1286 147 1287 153 L1289 164 Q1290 170 1295 170 Z" fill="#4b4b4b"/>
<path d="M1284 170 Q1289 170 1290 163 L1292 152 Q1293 147 1298 147 H1403 Q1409 147 1410 153 L1412 164 Q1413 170 1418 170 Z" fill="#4b4b4b"/>
<path d="M1407 170 Q1412 170 1413 163 L1415 152 Q1416 147 1421 147 H1526 Q1532 147 1533 153 L1535 164 Q1536 170 1541 170 Z" fill="#4b4b4b"/>
<path d="M1530 170 Q1535 170 1536 163 L1538 152 Q1539 147 1544 147 H1649 Q1655 147 1656 153 L1658 164 Q1659 170 1664 170 Z" fill="#4b4b4b"/>
<path d="M1653 170 Q1658 170 1659 163 L1661 152 Q1662 147 1667 147 H1772 Q1778 147 1779 153 L1781 164 Q1782 170 1787 170 Z" fill="#5e5e5e"/>
<text x="32" y="162.5" font-size="11.3" fill="#c2cad2">Start</text>
<text x="155" y="162.5" font-size="11.3" fill="#c2cad2">AR.A1-05 DENAH LT.2*</text>
<path d="M284.5 154.5 L291.5 161.5 M291.5 154.5 L284.5 161.5" stroke="#303030" stroke-width="1.4"/>
<text x="315" y="162.5" font-size="11.3" fill="#c2cad2">Menara 1500</text>
<path d="M407.5 154.5 L414.5 161.5 M414.5 154.5 L407.5 161.5" stroke="#303030" stroke-width="1.4"/>
<text x="438" y="162.5" font-size="11.3" fill="#c2cad2">Menara 3200</text>
<path d="M530.5 154.5 L537.5 161.5 M537.5 154.5 L530.5 161.5" stroke="#303030" stroke-width="1.4"/>
<text x="561" y="162.5" font-size="11.3" fill="#c2cad2">Menara 3200-B</text>
<path d="M653.5 154.5 L660.5 161.5 M660.5 154.5 L653.5 161.5" stroke="#303030" stroke-width="1.4"/>
<text x="684" y="162.5" font-size="11.3" fill="#c2cad2">Menara 3400</text>
<path d="M776.5 154.5 L783.5 161.5 M783.5 154.5 L776.5 161.5" stroke="#303030" stroke-width="1.4"/>
<text x="807" y="162.5" font-size="11.3" fill="#c2cad2">Menara 3400-B</text>
<path d="M899.5 154.5 L906.5 161.5 M906.5 154.5 L899.5 161.5" stroke="#303030" stroke-width="1.4"/>
<text x="930" y="162.5" font-size="11.3" fill="#c2cad2">PEKAPURAN*</text>
<path d="M1022.5 154.5 L1029.5 161.5 M1029.5 154.5 L1022.5 161.5" stroke="#303030" stroke-width="1.4"/>
<text x="1053" y="162.5" font-size="11.3" fill="#c2cad2">PEKAPURAN-1</text>
<path d="M1145.5 154.5 L1152.5 161.5 M1152.5 154.5 L1145.5 161.5" stroke="#303030" stroke-width="1.4"/>
<text x="1176" y="162.5" font-size="11.3" fill="#c2cad2">PEKAPURAN-2</text>
<path d="M1268.5 154.5 L1275.5 161.5 M1275.5 154.5 L1268.5 161.5" stroke="#303030" stroke-width="1.4"/>
<text x="1299" y="162.5" font-size="11.3" fill="#c2cad2">PEKAPURAN-3</text>
<path d="M1391.5 154.5 L1398.5 161.5 M1398.5 154.5 L1391.5 161.5" stroke="#303030" stroke-width="1.4"/>
<text x="1422" y="162.5" font-size="11.3" fill="#c2cad2">PEKAPURAN-4</text>
<path d="M1514.5 154.5 L1521.5 161.5 M1521.5 154.5 L1514.5 161.5" stroke="#303030" stroke-width="1.4"/>
<text x="1545" y="162.5" font-size="11.3" fill="#c2cad2">STO ULIN</text>
<path d="M1637.5 154.5 L1644.5 161.5 M1644.5 154.5 L1637.5 161.5" stroke="#303030" stroke-width="1.4"/>
<text x="1668" y="162.5" font-size="11.3" fill="#ffffff">STO ULIN-1</text>
<path d="M1760.5 154.5 L1767.5 161.5 M1767.5 154.5 L1760.5 161.5" stroke="#3a3a3a" stroke-width="1.4"/>
<path d="M1787 152 Q1787 150 1790 150 H1800 Q1806 150 1808 158 L1809 167 H1792 Q1788 166 1787 160Z" fill="#4a4a4a"/>
<path d="M1798.5 154 V163 M1794 158.5 H1803" stroke="#e6e6e6" stroke-width="2"/>
<path d="M1901 152 L1905 156 L1909 152 M1901 158 L1905 162 L1909 158" stroke="#e8e8e8" stroke-width="1.6" fill="none"/>
<rect x="1912" y="173" width="6" height="830" fill="#d6e3f4"/>
<text x="4" y="191" font-size="12" fill="#e8e8e8">[−][Top][2D Wireframe]</text>
<rect x="1851" y="189" width="10" height="3" fill="#f4f4f4"/>
<path d="M1872.5 186.5 H1879.5 V192.5 H1872.5Z M1874.5 186.5 V184.5 H1881.5 V190.5 H1879.5" stroke="#f4f4f4" stroke-width="1.6" fill="none"/>
<path d="M1891.5 184.5 L1899.5 192.5 M1899.5 184.5 L1891.5 192.5" stroke="#f4f4f4" stroke-width="2"/>
<circle cx="1829" cy="279" r="53.5" fill="none" stroke="#464a4f" stroke-width="13"/>
<rect x="1803.5" y="253" width="51" height="51" fill="#b2b2b2"/><rect x="1813" y="263" width="32" height="32" fill="#a2a2a2"/>
<text x="1829" y="284" font-size="12" font-weight="bold" fill="#686868" text-anchor="middle">TOP</text>
<text x="1829" y="230" font-size="19" font-weight="bold" fill="#b4b4b4" text-anchor="middle">N</text>
<text x="1829" y="343" font-size="19" font-weight="bold" fill="#b4b4b4" text-anchor="middle">S</text>
<text x="1772" y="286" font-size="19" font-weight="bold" fill="#b4b4b4" text-anchor="middle">W</text>
<text x="1886" y="286" font-size="19" font-weight="bold" fill="#b4b4b4" text-anchor="middle">E</text>
<rect x="1805.5" y="366.5" width="47" height="16" rx="4" fill="#8c8c8c" stroke="#6e6e6e"/><text x="1808" y="378.5" font-size="11" fill="#555">WCS</text><path d="M1838 373 H1845 L1841.5 377Z" fill="none" stroke="#666"/>
<rect x="1876.5" y="409.5" width="31" height="211" rx="3" fill="#56595d" stroke="#222" stroke-dasharray="1 1"/>
<circle cx="1901" cy="414" r="2.5" fill="none" stroke="#45494d"/>
<path d="M1882 436 A9 9 0 1 1 1900 436 A9 9 0 0 1 1882 436Z" fill="none" stroke="#45494d" stroke-width="1.2"/><circle cx="1891" cy="434" r="6" fill="none" stroke="#45494d" stroke-width="1.2"/>
<path d="M1889 459 H1894 L1891.5 461.5Z" fill="#45494d"/><path d="M1880 466 H1904 M1880 573 H1904" stroke="#4a4e52"/>
<path d="M1884 484 L1888 490 V476 M1888 484 V473 M1892 484 V472 M1896 484 V473 M1899 485 V477 Q1900 492 1893 494 H1889 Q1885 490 1884 484" fill="none" stroke="#45494d" stroke-width="1.2"/>
<path d="M1880 498 L1898 516 M1898 498 L1880 516" stroke="#45494d" stroke-width="1.2"/><circle cx="1898" cy="513" r="4.5" fill="#56595d" stroke="#45494d" stroke-width="1.2"/><path d="M1901 516 L1904 519" stroke="#45494d" stroke-width="2"/>
<path d="M1889 528 H1894 L1891.5 530.5Z M1889 560 H1894 L1891.5 562.5Z" fill="#45494d"/>
<path d="M1891 537 V555 M1887 541 L1891 536 L1895 541" fill="none" stroke="#45494d" stroke-width="1.2"/><ellipse cx="1892" cy="548" rx="9" ry="3.5" fill="none" stroke="#45494d" stroke-width="1.2"/>
<g fill="none" stroke="#45494d" stroke-width="1.1"><rect x="1880.5" y="578.5" width="5.5" height="5.5"/><rect x="1888.5" y="578.5" width="5.5" height="5.5"/><rect x="1896.5" y="578.5" width="5.5" height="5.5"/><rect x="1880.5" y="587.5" width="16" height="12"/></g><path d="M1886 590 L1892 593.5 L1886 597Z" fill="#45494d"/>
<circle cx="1901" cy="615" r="2.5" fill="none" stroke="#45494d"/>
<path d="M20.5 932 V982.5 H71" stroke="#ececec" stroke-width="1.2" fill="none"/><rect x="16.5" y="977.5" width="9.5" height="9.5" fill="none" stroke="#ececec" stroke-width="1.2"/>
<path d="M75 968 L88 981 M88 968 L75 981 M22 915 L28.5 922 L35 915 M28.5 922 V928" stroke="#ececec" stroke-width="1.2" fill="none"/>
<rect x="0" y="1003" width="1918" height="25" fill="#383938"/><rect x="0" y="1003" width="1918" height="1.3" fill="#505050"/>
<path d="M12 1003 H70 L66 1016 Q65 1020 60 1020 H22 Q17 1020 16 1016 Z" fill="#7a7a7a"/>
<path d="M72 1003 H136 L131 1016 Q130 1020 125 1020 H79 Q74 1020 73 1016 Z" fill="#575757"/>
<path d="M143 1003 H161 L158 1015 Q157 1019 152 1019 H139 Z" fill="#4c4c4c"/>
<text x="23.5" y="1016" font-size="13" font-weight="bold" fill="#ffffff">Model</text>
<text x="81" y="1016" font-size="12" fill="#d0d6dc">Layout1</text>
<path d="M150 1007 V1015 M146 1011 H154" stroke="#dcdcdc" stroke-width="2"/>
<rect x="672" y="1004" width="181" height="24" fill="#535353"/>
<rect x="855" y="1004" width="48" height="24" fill="#535353"/>
<rect x="905" y="1004" width="64" height="24" fill="#535353"/>
<rect x="971" y="1004" width="153" height="24" fill="#535353"/>
<rect x="1126" y="1004" width="62" height="24" fill="#535353"/>
<rect x="1190" y="1004" width="22" height="24" fill="#535353"/>
<rect x="1214" y="1004" width="24" height="24" fill="#535353"/>
<rect x="1240" y="1004" width="23" height="24" fill="#535353"/>
<rect x="1265" y="1004" width="37" height="24" fill="#535353"/>
<rect x="1304" y="1004" width="104" height="24" fill="#535353"/>
<rect x="1410" y="1004" width="146" height="24" fill="#535353"/>
<rect x="1558" y="1004" width="39" height="24" fill="#535353"/>
<rect x="1599" y="1004" width="23" height="24" fill="#535353"/>
<rect x="1624" y="1004" width="98" height="24" fill="#535353"/>
<rect x="1724" y="1004" width="24" height="24" fill="#535353"/>
<rect x="1750" y="1004" width="39" height="24" fill="#535353"/>
<rect x="1791" y="1004" width="23" height="24" fill="#535353"/>
<rect x="1816" y="1004" width="26" height="24" fill="#535353"/>
<rect x="1844" y="1004" width="23" height="24" fill="#535353"/>
<rect x="1869" y="1004" width="49" height="24" fill="#535353"/>
<rect x="998" y="1004" width="22" height="24" fill="#4f86c6"/>
<rect x="1023" y="1004" width="22" height="24" fill="#4f86c6"/>
<rect x="1126" y="1004" width="22" height="24" fill="#4f86c6"/>
<rect x="1150" y="1004" width="22" height="24" fill="#4f86c6"/>
<rect x="1214.5" y="1004" width="22.5" height="24" fill="#4f86c6"/>
<rect x="1307" y="1004" width="22" height="24" fill="#4f86c6"/>
<rect x="1370.5" y="1004" width="21.5" height="24" fill="#4f86c6"/>
<rect x="1412.5" y="1004" width="21.5" height="24" fill="#4f86c6"/>
<rect x="1819" y="1004" width="22" height="24" fill="#4f86c6"/>
<text x="680" y="1021" font-size="12" fill="#e8e8e8">15081.5289, -224.7509, 0.0000</text>
<text x="859.5" y="1021" font-size="11.3" fill="#e8e8e8">MODEL</text>
<path d="M914 1010 V1024 M918 1010 V1024 M922 1010 V1024 M911 1013 H925 M911 1017 H925 M911 1021 H925" stroke="#e8e8e8" stroke-width="1.2"/>
<g fill="#e8e8e8"><rect x="936" y="1010" width="2" height="2"/><rect x="936" y="1014" width="2" height="2"/><rect x="936" y="1018" width="2" height="2"/><rect x="940" y="1010" width="2" height="2"/><rect x="940" y="1014" width="2" height="2"/><rect x="940" y="1018" width="2" height="2"/><rect x="944" y="1010" width="2" height="2"/><rect x="944" y="1014" width="2" height="2"/><rect x="944" y="1018" width="2" height="2"/></g>
<path d="M957.5 1014 H965.5 L961.5 1018Z" fill="#e8e8e8"/>
<path d="M976 1024 H983 V1017 M983 1010 H991 V1016 H983Z" stroke="#e8e8e8" stroke-width="1.2" fill="none"/><rect x="976" y="1018" width="7" height="6" fill="#e8e8e8"/>
<path d="M1002 1012 H1008 M1005 1009 V1015" stroke="#e8e8e8" stroke-width="1.4"/><rect x="1007" y="1017" width="10" height="5" fill="#e8e8e8"/>
<path d="M1029 1009 V1023 H1040 M1029 1018 H1034 V1023" stroke="#e8e8e8" stroke-width="1.4" fill="none"/>
<circle cx="1056" cy="1017" r="6" fill="none" stroke="#cfcfcf" stroke-width="1.2"/><path d="M1051 1021 L1063 1009" stroke="#cfcfcf" stroke-width="1.2"/>
<path d="M1073 1014 H1081 L1077 1018Z" fill="#e8e8e8"/>
<path d="M1089 1009 L1103 1024" stroke="#e07040" stroke-width="1.2"/><path d="M1096 1009 V1024" stroke="#70d070" stroke-width="1.2"/><circle cx="1096" cy="1016" r="1.5" fill="none" stroke="#ddd"/>
<path d="M1112 1014 H1120 L1116 1018Z" fill="#e8e8e8"/>
<path d="M1130 1024 L1144 1011 M1130 1024 H1144" stroke="#e8e8e8" stroke-width="1.3"/><circle cx="1137" cy="1018" r="1.7" fill="#e8e8e8"/>
<rect x="1155.5" y="1010.5" width="13" height="13" fill="none" stroke="#e8e8e8" stroke-width="1.3"/><rect x="1153" y="1008" width="4" height="4" fill="#4f86c6" stroke="#e8e8e8"/>
<path d="M1176 1014 H1184 L1180 1018Z" fill="#e8e8e8"/>
<g fill="#e8e8e8"><rect x="1192" y="1010" width="16" height="1.5"/><rect x="1192" y="1013.5" width="13" height="2"/><rect x="1192" y="1017.5" width="16" height="2.5"/><rect x="1192" y="1021.5" width="10" height="3"/></g>
<rect x="1217.5" y="1009.5" width="16" height="15" fill="#f0f0f0"/><rect x="1218.5" y="1010.5" width="1.75" height="1.75" fill="#4f86c6"/><rect x="1218.5" y="1014.0" width="1.75" height="1.75" fill="#4f86c6"/><rect x="1218.5" y="1017.5" width="1.75" height="1.75" fill="#4f86c6"/><rect x="1218.5" y="1021.0" width="1.75" height="1.75" fill="#4f86c6"/><rect x="1222.0" y="1010.5" width="1.75" height="1.75" fill="#4f86c6"/><rect x="1222.0" y="1014.0" width="1.75" height="1.75" fill="#4f86c6"/><rect x="1222.0" y="1017.5" width="1.75" height="1.75" fill="#4f86c6"/><rect x="1222.0" y="1021.0" width="1.75" height="1.75" fill="#4f86c6"/><rect x="1225.5" y="1010.5" width="1.75" height="1.75" fill="#4f86c6"/><rect x="1225.5" y="1014.0" width="1.75" height="1.75" fill="#4f86c6"/><rect x="1225.5" y="1017.5" width="1.75" height="1.75" fill="#4f86c6"/><rect x="1225.5" y="1021.0" width="1.75" height="1.75" fill="#4f86c6"/><rect x="1229.0" y="1010.5" width="1.75" height="1.75" fill="#4f86c6"/><rect x="1229.0" y="1014.0" width="1.75" height="1.75" fill="#4f86c6"/><rect x="1229.0" y="1017.5" width="1.75" height="1.75" fill="#4f86c6"/><rect x="1229.0" y="1021.0" width="1.75" height="1.75" fill="#4f86c6"/>
<rect x="1247" y="1015" width="12" height="9" fill="#a0dcb0"/><path d="M1243 1011 H1248 M1245.5 1008.5 V1013.5" stroke="#eee" stroke-width="1.2"/>
<path d="M1271 1024 V1015 L1275 1011 H1285 V1020 L1281 1024 Z M1271 1015 H1281 V1024 M1281 1015 L1285 1011" stroke="#e8e8e8" stroke-width="1.2" fill="none"/><rect x="1268.5" y="1021.5" width="4" height="4" fill="none" stroke="#f0a040"/>
<path d="M1291.5 1014 H1299.5 L1295.5 1018Z" fill="#e8e8e8"/>
<path d="M1311 1024 V1010 M1309 1013 L1311 1009 L1313 1013 M1311 1024 H1325 M1322 1022 L1326 1024 L1322 1026" stroke="#e8e8e8" stroke-width="1.3" fill="none"/><path d="M1319 1010 L1315 1016 H1319 L1316 1021" stroke="#e8e8e8" stroke-width="1.2" fill="none"/>
<rect x="1335.5" y="1010.5" width="13" height="13" fill="none" stroke="#e8e8e8" stroke-dasharray="3 2"/><g fill="#5ab4f0"><rect x="1334" y="1009" width="3" height="3"/><rect x="1347" y="1009" width="3" height="3"/><rect x="1334" y="1022" width="3" height="3"/><rect x="1347" y="1022" width="3" height="3"/></g>
<path d="M1357.7 1014 H1365.7 L1361.7 1018Z" fill="#e8e8e8"/>
<path d="M1381 1009 L1388 1013 V1021 L1381 1025 L1374 1021 V1013Z M1381 1017 V1025 M1381 1017 L1374 1013 M1381 1017 L1388 1013" stroke="#e8e8e8" stroke-width="1.2" fill="none"/>
<path d="M1396 1014 H1404 L1400 1018Z" fill="#e8e8e8"/>
<path d="M1423 1008 L1428 1025 L1423 1020 L1418 1025Z" fill="#e8e8e8"/><circle cx="1429" cy="1011" r="2.5" fill="none" stroke="#e8e8e8"/>
<path d="M1446 1008 L1451 1025 L1446 1020 L1441 1025Z" fill="#cfcfcf"/><path d="M1450 1010 L1453 1013" stroke="#ccc"/>
<path d="M1471 1008 L1476 1025 L1471 1020 L1466 1025Z" fill="#cfcfcf"/>
<text x="1488" y="1021" font-size="11.3" fill="#e8e8e8">1:1 / 100%</text>
<path d="M1544.5 1014 H1552.5 L1548.5 1018Z" fill="#e8e8e8"/>
<circle cx="1570" cy="1016" r="5.5" fill="none" stroke="#d0d0d0" stroke-width="3" stroke-dasharray="2.2 1.6"/><circle cx="1570" cy="1016" r="3.5" fill="none" stroke="#d0d0d0" stroke-width="2"/>
<path d="M1586.5 1014 H1594.5 L1590.5 1018Z" fill="#e8e8e8"/>
<path d="M1611 1009 V1023 M1604 1016 H1618" stroke="#e8e8e8" stroke-width="1.5"/>
<path d="M1635 1009 H1641 V1024 H1635Z" fill="#cfcfcf"/><path d="M1638 1011 H1641 M1638 1014 H1641 M1638 1017 H1641 M1638 1020 H1641" stroke="#535353"/>
<text x="1655" y="1021" font-size="12" fill="#e8e8e8">Decimal</text>
<path d="M1711 1014 H1719 L1715 1018Z" fill="#e8e8e8"/>
<rect x="1729.5" y="1009.5" width="12" height="14" fill="none" stroke="#e8e8e8" stroke-width="1.2"/><path d="M1732 1014 H1739 M1732 1017 H1739 M1732 1020 H1739" stroke="#e8e8e8"/>
<path d="M1755 1023 V1010 H1770 V1018" stroke="#e8e8e8" stroke-width="1.2" fill="none"/><rect x="1764" y="1019" width="6" height="5" fill="#e8e8e8"/>
<path d="M1778.5 1014 H1786.5 L1782.5 1018Z" fill="#e8e8e8"/>
<rect x="1795.5" y="1009.5" width="6" height="6" fill="none" stroke="#e8e8e8"/><circle cx="1808" cy="1013" r="3" fill="none" stroke="#e8e8e8"/><path d="M1802 1025 L1805 1019 L1808 1025Z" fill="none" stroke="#e8e8e8"/>
<circle cx="1830" cy="1016" r="7.5" fill="#d8d8d8"/><circle cx="1830" cy="1016" r="6" fill="#5a8ac4"/><path d="M1826 1020 L1834 1012" stroke="#eee" stroke-width="1.5"/>
<rect x="1849" y="1009" width="12" height="12" fill="#6ab8f0"/><rect x="1849" y="1017" width="8" height="5" fill="#e8d060"/><path d="M1854 1022 L1857 1025 L1863 1018" stroke="#20c020" stroke-width="2" fill="none"/>
<rect x="1875.5" y="1010.5" width="15" height="12" fill="none" stroke="#e8e8e8"/><path d="M1878 1020 L1882 1016 M1884 1014 L1888 1012" stroke="#e8e8e8"/>
<path d="M1898 1010 H1914 M1898 1016 H1914 M1898 1022 H1914" stroke="#e8e8e8" stroke-width="2"/>
<rect x="575.5" y="977.5" width="54" height="25" rx="2" fill="#3e3e3e" stroke="#2a2a2a"/>
<rect x="575.5" y="977.5" width="54" height="10" fill="#4a4a4a" opacity="0.5"/>
<g fill="#9a9a9a"><rect x="579" y="982" width="1.5" height="1.5"/><rect x="579" y="985" width="1.5" height="1.5"/><rect x="579" y="988" width="1.5" height="1.5"/><rect x="579" y="991" width="1.5" height="1.5"/><rect x="579" y="994" width="1.5" height="1.5"/><rect x="579" y="997" width="1.5" height="1.5"/><rect x="582" y="982" width="1.5" height="1.5"/><rect x="582" y="985" width="1.5" height="1.5"/><rect x="582" y="988" width="1.5" height="1.5"/><rect x="582" y="991" width="1.5" height="1.5"/><rect x="582" y="994" width="1.5" height="1.5"/><rect x="582" y="997" width="1.5" height="1.5"/></g>
<path d="M591 985 L598 992 M598 985 L591 992" stroke="#e8e8e8" stroke-width="1.6"/>
<path d="M611 984 L618 991 L621 994" stroke="#e0e0e0" stroke-width="2.4"/><circle cx="612" cy="984" r="3" fill="none" stroke="#e0e0e0" stroke-width="1.4"/>
<rect x="629" y="977" width="715" height="25.5" fill="#c4c4c4"/>
<path d="M629 978.5 H1343" stroke="#f0f0f0" stroke-dasharray="1 1"/>
<rect x="634.5" y="982.5" width="14" height="12" fill="#a8a8a8" stroke="#777"/><path d="M637 985 L640 988 L637 991 M641 992 H645" stroke="#333" stroke-width="1"/>
<path d="M651 987 H658 L654.5 990.5Z" fill="#777"/>
<text x="665" y="993.5" font-size="11.7" font-style="italic" fill="#7a7a7a" font-family="Liberation Mono">Type a command</text>
<text x="1288" y="997" font-size="16" font-style="italic" fill="#9ad89a" font-family="Liberation Mono" textLength="55" lengthAdjust="spacingAndGlyphs" xml:space="preserve">C:\...  \SITE</text>
<path d="M1334 993 L1339 988 L1344 993Z" fill="#444" opacity="0.8"/>
<rect x="635" y="903" width="697" height="30" rx="2" fill="#6a6a6a" opacity="0.82"/>
<text x="637" y="915" font-size="11.7" fill="#d4d4d4" font-family="Liberation Mono" xml:space="preserve">Autodesk DWG.  This file is a TrustedDWG last saved by an Autodesk application or Autodesk licensed</text>
<text x="637" y="930" font-size="11.7" fill="#d4d4d4" font-family="Liberation Mono">application.</text>
<rect x="635" y="938" width="60" height="14" rx="2" fill="#6a6a6a" opacity="0.85"/>
<text x="637" y="949.5" font-size="11.7" fill="#dcdcdc" font-family="Liberation Mono">Command:</text>
<rect x="635" y="958.5" width="60" height="14" rx="2" fill="#6a6a6a" opacity="0.85"/>
<text x="637" y="970.0" font-size="11.7" fill="#dcdcdc" font-family="Liberation Mono">Command:</text>
</svg>
<svg class="a" style="left:0;top:0" width="1918" height="173" viewBox="0 0 1918 173" font-family="Liberation Sans, sans-serif">
<defs>
<linearGradient id="gq" x1="0" y1="0" x2="0" y2="1"><stop offset="0" stop-color="#b2b2b2"/><stop offset="1" stop-color="#9d9d9d"/></linearGradient>
<linearGradient id="glogo" x1="0" y1="0" x2="0" y2="1"><stop offset="0" stop-color="#e2e4e4"/><stop offset="0.5" stop-color="#a9abab"/><stop offset="1" stop-color="#8e9090"/></linearGradient>
<linearGradient id="gpt" x1="0" y1="0" x2="0" y2="1"><stop offset="0" stop-color="#4e4e4e"/><stop offset="1" stop-color="#474747"/></linearGradient>
<linearGradient id="gdd" x1="0" y1="0" x2="0" y2="1"><stop offset="0" stop-color="#6a6a6a"/><stop offset="1" stop-color="#4a4a4a"/></linearGradient>
<linearGradient id="gtab" x1="0" y1="0" x2="0" y2="1"><stop offset="0" stop-color="#626262"/><stop offset="1" stop-color="#585858"/></linearGradient>
<linearGradient id="grest" x1="0" y1="0" x2="1" y2="0"><stop offset="0" stop-color="#424242"/><stop offset="1" stop-color="#3c3c3c"/></linearGradient>
</defs>
<!-- title bar -->
<rect x="0" y="0" width="1918" height="24" fill="#5e2219"/>
<rect x="41" y="0" width="310" height="24" fill="url(#gq)"/><rect x="41" y="0" width="310" height="1" fill="#8a8a8a"/>
<rect x="1310" y="0" width="448" height="24" fill="url(#gq)"/><rect x="1310" y="0" width="448" height="1" fill="#8a8a8a"/>
<text x="716" y="16" font-size="11.6" fill="#1e1010">Autodesk AutoCAD 2019</text>
<text x="858" y="16" font-size="11.4" fill="#1e1010">STO ULIN-1.dwg</text>
<!-- tabs row -->
<rect x="0" y="24" width="1918" height="21" fill="#444444"/>
<rect x="0" y="24" width="1918" height="1" fill="#2a2a2a"/>
<rect x="0" y="44" width="1918" height="1" fill="#2c2c2c"/><path d="M46.5 46 V29 Q46.5 26.5 49 26.5 H94 Q96.5 26.5 96.5 29 V46" fill="url(#gtab)" stroke="#2e2e2e" stroke-width="1"/>
<g font-size="12" fill="#f0f0f0">
<text x="55" y="39">Home</text><text x="108" y="39">Insert</text><text x="157" y="39">Annotate</text>
<text x="226" y="39">Parametric</text><text x="303" y="39">View</text><text x="348" y="39">Manage</text>
<text x="411" y="39">Output</text><text x="469" y="39">Add-ins</text><text x="531" y="39">Collaborate</text>
<text x="612" y="39">Featured Apps</text><text x="708" y="39">Express Tools</text>
</g>
<rect x="809" y="31" width="14" height="8" rx="3" fill="#f0f0f0"/><path d="M812 37 L816 33 L820 37Z" fill="#333"/>
<path d="M826 34 L832 34 L829 37Z" fill="#e0e0e0"/>
<!-- ribbon base -->
<rect x="0" y="45" width="1918" height="100" fill="#3d3d3d"/>
<rect x="1677" y="45" width="241" height="98" fill="url(#grest)"/>
<rect x="0" y="142" width="1918" height="1" fill="#2a2a2a"/><rect x="0" y="143" width="1918" height="1.5" fill="#5e5e5e"/>

<rect x="2" y="45" width="223" height="97" fill="#595959"/>
<rect x="2" y="124" width="223" height="18" fill="url(#gpt)"/>
<rect x="227" y="45" width="247" height="97" fill="#595959"/>
<rect x="227" y="124" width="247" height="18" fill="url(#gpt)"/>
<rect x="475" y="45" width="195" height="97" fill="#595959"/>
<rect x="475" y="124" width="195" height="18" fill="url(#gpt)"/>
<rect x="671" y="45" width="272" height="97" fill="#595959"/>
<rect x="671" y="124" width="272" height="18" fill="url(#gpt)"/>
<rect x="945" y="45" width="158" height="97" fill="#595959"/>
<rect x="945" y="124" width="158" height="18" fill="url(#gpt)"/>
<rect x="1105" y="45" width="264" height="97" fill="#595959"/>
<rect x="1105" y="124" width="264" height="18" fill="url(#gpt)"/>
<rect x="1371" y="45" width="67" height="97" fill="#595959"/>
<rect x="1371" y="124" width="67" height="18" fill="url(#gpt)"/>
<rect x="1440" y="45" width="95" height="97" fill="#595959"/>
<rect x="1440" y="124" width="95" height="18" fill="url(#gpt)"/>
<rect x="1537" y="45" width="77" height="97" fill="#595959"/>
<rect x="1537" y="124" width="77" height="18" fill="url(#gpt)"/>
<rect x="1616" y="45" width="60" height="97" fill="#595959"/>
<rect x="1616" y="124" width="60" height="18" fill="url(#gpt)"/>
<text x="93" y="137" font-size="12" fill="#f0f0f0">Draw</text>
<path d="M126 131 H134 L130 135Z" fill="#f0f0f0"/>
<text x="325" y="137" font-size="12" fill="#f0f0f0">Modify</text>
<path d="M369 131 H377 L373 135Z" fill="#f0f0f0"/>
<text x="537" y="137" font-size="12" fill="#f0f0f0">Annotation</text>
<path d="M601 131 H609 L605 135Z" fill="#f0f0f0"/>
<text x="784" y="137" font-size="12" fill="#f0f0f0">Layers</text>
<path d="M824 131 H832 L828 135Z" fill="#f0f0f0"/>
<text x="1003" y="137" font-size="12" fill="#f0f0f0">Block</text>
<path d="M1038 131 H1046 L1042 135Z" fill="#f0f0f0"/>
<text x="1197" y="137" font-size="12" fill="#f0f0f0">Properties</text>
<path d="M1256 131 H1264 L1260 135Z" fill="#f0f0f0"/>
<text x="1378" y="137" font-size="12" fill="#f0f0f0">Groups</text>
<path d="M1421 131 H1429 L1425 135Z" fill="#f0f0f0"/>
<text x="1460" y="137" font-size="12" fill="#f0f0f0">Utilities</text>
<path d="M1505 131 H1513 L1509 135Z" fill="#f0f0f0"/>
<text x="1550" y="137" font-size="12" fill="#f0f0f0">Clipboard</text>
<text x="1621" y="137" font-size="12" fill="#f0f0f0">View</text>
<path d="M1652 131 H1660 L1656 135Z" fill="#f0f0f0"/>
<path d="M1358 129 L1364 135 M1364 131 V135 H1360" stroke="#e8e8e8" stroke-width="1.2" fill="none"/>
<path d="M1666 129 L1672 135 M1672 131 V135 H1668" stroke="#e8e8e8" stroke-width="1.2" fill="none"/>
<g stroke="#d6d6d6" stroke-width="1.2" fill="none">
<line x1="10" y1="81" x2="36" y2="55"/>
<line x1="53" y1="75.5" x2="70" y2="75.5"/><path d="M74 60.5 A7.5 7.5 0 0 1 74 75.5"/>
<circle cx="115.5" cy="67.5" r="15"/>
<path d="M149.5 79 Q153 61 175 55"/>
<rect x="188.5" y="56.5" width="13.5" height="10"/>
<ellipse cx="194" cy="85" rx="7" ry="5" stroke-dasharray="4 2"/>
<rect x="188.5" y="102.5" width="14" height="12"/><path d="M186 102.5 H205 M186 114.5 H205 M188.5 100 V117 M202.5 100 V117"/>
</g>
<rect x="6.5" y="80.5" width="4" height="4" fill="#5ab4f0"/>
<rect x="35.5" y="51.5" width="4" height="4" fill="#5ab4f0"/>
<rect x="49.5" y="73.5" width="4" height="4" fill="#5ab4f0"/>
<rect x="69.5" y="73.5" width="4" height="4" fill="#5ab4f0"/>
<rect x="69.5" y="58.5" width="4" height="4" fill="#5ab4f0"/>
<rect x="113.0" y="66.0" width="4" height="4" fill="#5ab4f0"/>
<rect x="147.5" y="79.5" width="4" height="4" fill="#5ab4f0"/>
<rect x="155.5" y="60.5" width="4" height="4" fill="#5ab4f0"/>
<rect x="174.5" y="52.5" width="4" height="4" fill="#5ab4f0"/>
<path d="M116 67 L124 59 M120 58.5 H124.5 V63" stroke="#5ab4f0" stroke-width="1.3" fill="none"/>
<rect x="187.0" y="55.0" width="3" height="3" fill="#5ab4f0"/>
<rect x="200.5" y="65.0" width="3" height="3" fill="#5ab4f0"/>
<rect x="192.75" y="78.75" width="2.5" height="2.5" fill="#5ab4f0"/>
<rect x="192.75" y="83.75" width="2.5" height="2.5" fill="#5ab4f0"/>
<rect x="199.75" y="83.75" width="2.5" height="2.5" fill="#5ab4f0"/>
<path d="M190 113 L201 104 M190 109 L197 103 M194 113 L201 107" stroke="#5ab4f0" stroke-width="1.3"/>
<text x="23" y="99" font-size="12" fill="#f0f0f0" text-anchor="middle">Line</text>
<text x="66" y="99" font-size="12" fill="#f0f0f0" text-anchor="middle">Polyline</text>
<text x="116" y="99" font-size="12" fill="#f0f0f0" text-anchor="middle">Circle</text>
<text x="162" y="99" font-size="12" fill="#f0f0f0" text-anchor="middle">Arc</text>
<path d="M112.5 104.2 H118.5 L115.5 107.8Z" fill="#f0f0f0"/>
<path d="M158 104.2 H164 L161 107.8Z" fill="#f0f0f0"/>
<path d="M208.5 59.2 H215.5 L212 62.8Z" fill="#f0f0f0"/>
<path d="M208.5 83.2 H215.5 L212 86.8Z" fill="#f0f0f0"/>
<path d="M208.5 107.2 H215.5 L212 110.8Z" fill="#f0f0f0"/>
<g stroke="#f0f0f0" stroke-width="1.3" fill="none">
<path d="M240.5 53 V68 M233 60.5 H248"/>
<path d="M318.5 57 A6.5 6.5 0 1 1 311 55.5"/>
<circle cx="236" cy="80.5" r="3"/><path d="M241 78 H245 V83"/>
<path d="M306 91.5 L311 78 V91.5Z"/>
<path d="M240 101.5 H233.5 V116.5 H240 M240 101.5 V109"/><path d="M236.5 112.5 H244 M241.5 110 L244 112.5 L241.5 115"/>
<rect x="305.5" y="108.5" width="8" height="8"/>
<rect x="375.5" y="102.5" width="4.5" height="4.5"/>
</g>
<path d="M240.5 52 L237.5 55.5 H243.5Z M240.5 69 L237.5 65.5 H243.5Z M232 60.5 L235.5 57.5 V63.5Z M249 60.5 L245.5 57.5 V63.5Z" fill="#f0f0f0"/>
<path d="M316 54 L320 57.5 L315.5 59Z" fill="#f0f0f0"/><path d="M243 82 L245 85 L247 82Z" fill="#f0f0f0"/>
<g stroke="#5ab4f0" stroke-width="1.3" fill="none"><circle cx="240" cy="89.5" r="3"/><circle cx="246" cy="89.5" r="3"/>
<path d="M313 78 V91.5 H319Z"/><path d="M241 102 L248 116 H241"/><path d="M305.5 108 V101.5 H320.5 V116.5 H314"/>
<path d="M382.5 102.5 H387 V107 H382.5Z M375.5 109.5 H380 V114 H375.5Z M382.5 109.5 H387 V114 H382.5Z"/>
<path d="M374 85 V80 A5.5 5.5 0 0 1 379.5 77.5"/>
<path d="M451 89 V80 L454 77 H465 M465 77 V88 L461 91 M454 77 V80"/>
<path d="M464 103.5 H456 A5.5 5.5 0 0 0 456 114.5 H464"/>
<path d="M373.5 54.5 H378"/></g>
<g stroke="#d6d6d6" stroke-width="1.2" fill="none"><path d="M374 87 V93"/><path d="M384 77.5 H390"/><rect x="452" y="80" width="9" height="11"/><path d="M464 106.5 H456 A2.5 2.5 0 0 0 456 111.5 H464"/>
<path d="M380 54 L386 65 M385 54 L379 65"/><circle cx="380" cy="66.5" r="2"/><circle cx="385.5" cy="66.5" r="2"/><path d="M386 54.5 H390"/></g>
<path d="M452.5 63.5 L462.5 53 L466 53 L466 56.5 L456.5 67Z" fill="#f5c47a"/><path d="M452.5 63.5 L456.5 67 L455.5 68 L451 64.5Z" fill="#f4f4f4"/><circle cx="452" cy="67" r="2.4" fill="#c07850"/><path d="M449 69.5 H452 M456 69.5 H465" stroke="#5ab4f0" stroke-width="1.2"/>
<text x="254" y="65" font-size="12" fill="#f0f0f0">Move</text>
<text x="326" y="65" font-size="12" fill="#f0f0f0">Rotate</text>
<text x="395" y="65" font-size="12" fill="#f0f0f0">Trim</text>
<text x="254" y="89" font-size="12" fill="#f0f0f0">Copy</text>
<text x="326" y="89" font-size="12" fill="#f0f0f0">Mirror</text>
<text x="395" y="89" font-size="12" fill="#f0f0f0">Fillet</text>
<text x="254" y="113" font-size="12" fill="#f0f0f0">Stretch</text>
<text x="326" y="113" font-size="12" fill="#f0f0f0">Scale</text>
<text x="395" y="113" font-size="12" fill="#f0f0f0">Array</text>
<path d="M428.0 59.7 H435.0 L431.5 63.3Z" fill="#f0f0f0"/>
<path d="M430.0 83.7 H437.0 L433.5 87.3Z" fill="#f0f0f0"/>
<path d="M430.0 107.7 H437.0 L433.5 111.3Z" fill="#f0f0f0"/>
<text x="500" y="82" font-size="37" fill="#dadada" text-anchor="middle">A</text>
<text x="499.5" y="99" font-size="12" fill="#f0f0f0" text-anchor="middle">Text</text>
<path d="M496.5 104.2 H502.5 L499.5 107.8Z" fill="#f0f0f0"/>
<g stroke="#d6d6d6" stroke-width="1.2" fill="none"><path d="M536.5 52 V84 M567.5 52 V84 M538 58.5 H566"/></g>
<path d="M537.5 58.5 L541.5 56 V61Z M566.5 58.5 L562.5 56 V61Z" fill="#d6d6d6"/>
<g stroke="#f5c47a" stroke-width="2" stroke-linecap="round"><path d="M551.5 68 V72 M545 71 L548 74.5 M558 71 L555 74.5 M541.5 78.5 H545 M558 78.5 H561.5"/></g>
<text x="552.5" y="99" font-size="12" fill="#f0f0f0" text-anchor="middle">Dimension</text>
<path d="M590 59 L596 54 M598 68 L604 63" stroke="#d6d6d6" stroke-width="1"/><path d="M593 56.5 L601 65.5" stroke="#5ab4f0" stroke-width="1.3"/>
<rect x="591.75" y="55.25" width="2.5" height="2.5" fill="#5ab4f0"/>
<rect x="599.75" y="64.25" width="2.5" height="2.5" fill="#5ab4f0"/>
<g stroke="#d6d6d6" stroke-width="1.2" fill="none"><circle cx="601.5" cy="82" r="3.5"/><path d="M597.5 82 Q593 82 590 92"/><rect x="589.5" y="102.5" width="15.5" height="13"/><path d="M589.5 106 H605 M589.5 109.5 H605 M589.5 112.5 H605 M594.5 106 V115.5 M600 106 V115.5"/></g>
<path d="M589 93 L589.5 87.5 L593.5 90Z" fill="#d6d6d6"/>
<text x="610" y="65" font-size="12" fill="#f0f0f0">Aligned</text>
<text x="610" y="89" font-size="12" fill="#f0f0f0">Leader</text>
<text x="611" y="113" font-size="12" fill="#f0f0f0">Table</text>
<path d="M658.0 59.7 H665.0 L661.5 63.3Z" fill="#f0f0f0"/>
<path d="M652.0 83.7 H659.0 L655.5 87.3Z" fill="#f0f0f0"/>
<g fill="#d6d6d6"><path d="M694 52 H713 L704 63 H686Z"/><path d="M690 65 H713 L709 70 H686Z"/><path d="M690 71.5 H712 L708 76 H686Z"/></g>
<rect x="705" y="66" width="13" height="18" fill="#f0f0f0"/><rect x="707" y="68" width="9" height="6" fill="#6ab8f0"/><path d="M708 78 H715 M708 81.5 H715 M709.5 76.5 L708 78 L709.5 79.5 M713.5 80 L715 81.5 L713.5 83" stroke="#555" stroke-width="1" fill="none"/>
<text x="703" y="99" font-size="12" fill="#f0f0f0" text-anchor="middle">Layer</text>
<text x="703" y="113" font-size="12" fill="#f0f0f0" text-anchor="middle">Properties</text>
<rect x="733.5" y="50.5" width="207" height="21" fill="url(#gdd)" stroke="#2b2b2b"/>
<circle cx="745" cy="59" r="5" fill="#f5c47a"/><rect x="743" y="63" width="4" height="4" fill="#e8e8e8"/>
<circle cx="763" cy="60" r="4.5" fill="#f5c47a"/><path d="M763 52 V54 M763 66 V68 M755 60 H757 M769 60 H771 M757.5 54.5 L759 56 M767 64 L768.5 65.5 M768.5 54.5 L767 56 M757.5 65.5 L759 64" stroke="#f5c47a" stroke-width="1"/>
<rect x="776" y="58" width="10" height="9" fill="#f5c47a"/><path d="M782 58 V55 A3 3 0 0 1 788 55 V57" stroke="#f5c47a" stroke-width="1.6" fill="none"/>
<rect x="796.5" y="55.5" width="14" height="13" fill="#00dd00" stroke="#111"/>
<text x="815" y="65" font-size="12" fill="#f0f0f0">TEXT</text>
<path d="M931.0 59.2 H938.0 L934.5 62.8Z" fill="#f0f0f0"/>
<path d="M741 78 H750 L746 84 H737Z" fill="#d6d6d6"/>
<circle cx="749" cy="87" r="3.5" fill="#6ab8f0"/><rect x="747.5" y="90" width="3" height="3" fill="#eee"/>
<g fill="#d6d6d6"><path d="M765 77 H777 L772 82 H761Z"/><path d="M765 81 H777 L772 86 H761Z"/></g><path d="M761 89 H772 L777 84" stroke="#5ab4f0" stroke-width="1.3" fill="none"/><path d="M778 87 L771 93 M771 93 V89 M771 93 H775" stroke="#d6d6d6" stroke-width="1.2" fill="none"/>
<path d="M789 78 H798 L794 84 H785Z" fill="#d6d6d6"/>
<path d="M797 84 V92 M793.5 86 L800.5 90 M800.5 86 L793.5 90" stroke="#5ab4f0" stroke-width="1.5"/>
<path d="M813 78 H822 L818 84 H809Z" fill="#d6d6d6"/>
<rect x="817" y="88" width="7" height="5" fill="#6ab8f0"/><path d="M818.5 88 V86 A2 2 0 0 1 822.5 86 V88" stroke="#6ab8f0" stroke-width="1.3" fill="none"/>
<circle cx="841" cy="80" r="3" fill="#d6d6d6"/><path d="M836 83 H848 L843 88 H833Z" fill="#6ab8f0"/><path d="M833 90 H843 L848 86 M833 93 H843 L848 89" stroke="#d6d6d6" stroke-width="1.3" fill="none"/>
<text x="854" y="89" font-size="12" fill="#f0f0f0">Make Current</text>
<g fill="#d6d6d6"><path d="M741 101 H753 L748 106 H737Z"/><path d="M741 105 H751 L746 109 H737Z"/><path d="M741 109 H749 L746 112 H737Z"/></g><circle cx="750" cy="110" r="4" fill="#f5c47a"/><rect x="748.5" y="113" width="3" height="3" fill="#eee"/>
<g fill="#d6d6d6"><path d="M765 101 H777 L772 106 H761Z"/><path d="M765 105 H777 L772 110 H761Z"/></g><path d="M761 113 H772 L777 108" stroke="#5ab4f0" stroke-width="1.3" fill="none"/><path d="M771 117 L778 111 M778 111 V115 M778 111 H774" stroke="#d6d6d6" stroke-width="1.2" fill="none"/>
<g fill="#d6d6d6"><path d="M789 101 H801 L796 106 H785Z"/><path d="M789 105 H799 L794 109 H785Z"/><path d="M789 109 H797 L794 112 H785Z"/></g><circle cx="797" cy="112" r="3" fill="#f5c47a"/>
<path d="M813 102 H822 L818 108 H809Z" fill="#d6d6d6"/>
<rect x="815" y="111" width="7" height="6" fill="#f5c47a"/><path d="M820 111 V109 A2 2 0 0 1 824 109 V110" stroke="#f5c47a" stroke-width="1.3" fill="none"/>
<g fill="#d6d6d6"><path d="M837 101 H847 L843 106 H833Z"/><path d="M837 105 H845 L841 109 H833Z"/><path d="M837 109 H843 L840 112 H833Z"/></g><path d="M841 113 L846 108 L849 111 L844 116Z" fill="#f5c47a"/><path d="M845 107 L848 104 L851 107 L848 110Z" fill="#eee"/>
<text x="854" y="113" font-size="12" fill="#f0f0f0">Match Layer</text>
<path d="M964 50 H978 L981 53 V74 H964Z" fill="#7cc4f4"/><path d="M976 50 L981 55 H976Z" fill="#e8f4ff"/>
<rect x="950.5" y="60.5" width="21" height="15" fill="#6e6e6e" stroke="#d6d6d6" stroke-width="1.2"/><circle cx="970" cy="77" r="7" fill="#6e6e6e" stroke="#d6d6d6" stroke-width="1.2"/><rect x="949" y="74" width="3" height="3" fill="#d6d6d6"/>
<text x="965.5" y="99" font-size="12" fill="#f0f0f0" text-anchor="middle">Insert</text>
<path d="M962.5 103.7 H968.5 L965.5 107.3Z" fill="#f0f0f0"/>
<rect x="990.5" y="58.5" width="9" height="7" fill="#6e6e6e" stroke="#d6d6d6"/><circle cx="999" cy="65" r="3.5" fill="#6e6e6e" stroke="#d6d6d6"/><path d="M1001 54 L1003 58 M1004 55 L1000 57" stroke="#f5c47a" stroke-width="2"/>
<rect x="990.5" y="82.5" width="9" height="7" fill="#6e6e6e" stroke="#d6d6d6"/><circle cx="1000" cy="89" r="3.5" fill="#6e6e6e" stroke="#d6d6d6"/><path d="M996 87 L1003 79" stroke="#f5c47a" stroke-width="3.2"/><path d="M1002 80 L1004.5 77.5" stroke="#c07850" stroke-width="3.2"/>
<path d="M989.5 102.5 H995 L1004 111.5 L997 118.5 L989.5 111Z" fill="#d6d6d6"/><path d="M992 107 L997 112 M993 105 H994" stroke="#595959" stroke-width="1.3"/><path d="M996 112 L1003 104" stroke="#f5c47a" stroke-width="3.2"/><path d="M1002 105 L1004.5 102.5" stroke="#c07850" stroke-width="3.2"/>
<text x="1010" y="65" font-size="12" fill="#f0f0f0">Create</text>
<text x="1010" y="89" font-size="12" fill="#f0f0f0">Edit</text>
<text x="1010" y="113" font-size="12" fill="#f0f0f0">Edit Attributes</text>
<path d="M1092.0 107.7 H1099.0 L1095.5 111.3Z" fill="#f0f0f0"/>
<rect x="1122" y="52" width="20" height="28" fill="#d6d6d6"/><rect x="1124.5" y="54.5" width="14" height="10" fill="#8ccaf6" stroke="#555" stroke-width="1"/><path d="M1125 70.5 H1134 M1125 75.5 H1133 M1129 69 V73 M1132 73 V77" stroke="#555" stroke-width="1.2"/>
<path d="M1137 77 L1144 70 L1149 75 L1142 84Z" fill="#f5c47a"/><path d="M1143 70 L1148 65 L1153 70 L1148 75Z" fill="#f4f4f4"/>
<text x="1137" y="99" font-size="12" fill="#f0f0f0" text-anchor="middle">Match</text>
<text x="1137" y="113" font-size="12" fill="#f0f0f0" text-anchor="middle">Properties</text>
<path d="M1177 60 L1177 52 A8 8 0 0 1 1184.5 57Z" fill="#d9a070"/><path d="M1177 60 L1184.5 57 A8 8 0 0 1 1181 67Z" fill="#c8503c"/><path d="M1177 60 L1181 67 A8 8 0 0 1 1172 66.5Z" fill="#8a50e0"/><path d="M1177 60 L1172 66.5 A8 8 0 0 1 1169.2 58Z" fill="#70b0e0"/><path d="M1177 60 L1169.2 58 A8 8 0 0 1 1172 53.5Z" fill="#20c020"/><path d="M1177 60 L1172 53.5 A8 8 0 0 1 1177 52Z" fill="#d0c040"/>
<g fill="#d6d6d6"><rect x="1169" y="76" width="16" height="1.3"/><rect x="1169" y="79.5" width="16" height="1.8"/><rect x="1169" y="83.5" width="16" height="2.5"/><rect x="1169" y="88" width="16" height="3.5"/></g>
<g stroke="#d6d6d6" stroke-width="1.2" stroke-dasharray="1 1"><path d="M1169 101.5 H1185"/></g><g stroke="#d6d6d6" stroke-width="1.2" stroke-dasharray="3 1"><path d="M1169 104.5 H1185 M1169 110.5 H1185"/></g><path d="M1169 107.5 H1185 M1169 113.5 H1185" stroke="#d6d6d6" stroke-width="1.2"/>
<rect x="1187.5" y="50.5" width="179" height="21" fill="url(#gdd)" stroke="#2b2b2b"/>
<rect x="1187.5" y="73.5" width="179" height="21" fill="url(#gdd)" stroke="#2b2b2b"/>
<rect x="1187.5" y="97.5" width="179" height="21" fill="url(#gdd)" stroke="#2b2b2b"/>
<rect x="1200" y="53" width="16" height="16" fill="#f8f8f8" stroke="#ccc"/>
<text x="1226" y="65" font-size="12" fill="#f0f0f0">ByBlock</text>
<path d="M1191 83.5 H1255 M1191 108.5 H1255" stroke="#f0f0f0" stroke-width="1.2"/>
<text x="1257" y="89" font-size="12" fill="#f0f0f0">ByLayer</text>
<text x="1257" y="113" font-size="12" fill="#f0f0f0">BYLAYER</text>
<path d="M1357.5 59.2 H1364.5 L1361 62.8Z" fill="#f0f0f0"/>
<path d="M1357.5 82.7 H1364.5 L1361 86.3Z" fill="#f0f0f0"/>
<path d="M1357.5 106.2 H1364.5 L1361 109.8Z" fill="#f0f0f0"/>
<path d="M1379 55 H1376 V83 H1379 M1397 70 V82 H1392" stroke="#f0f0f0" stroke-width="1.6" fill="none"/>
<path d="M1381 61 H1386 L1388 63 H1390 V68 H1381Z" fill="#5ab4f0"/><circle cx="1386" cy="75" r="4.5" fill="#aaa" stroke="#ccc"/>
<path d="M1397 52 L1399 57 L1404 55 L1401 60 L1405 63 L1400 63 L1399 68 L1396 64 L1392 66 L1393 61 L1390 58 L1395 58Z" fill="#f5c47a"/>
<text x="1391" y="99" font-size="12" fill="#f0f0f0" text-anchor="middle">Group</text>
<rect x="1418" y="55" width="6" height="5" fill="none" stroke="#5ab4f0"/><circle cx="1421" cy="64" r="2.5" fill="#aaa"/><path d="M1429 54 H1430 V68 H1428" stroke="#eee" fill="none"/><path d="M1425 60 L1432 67 M1432 60 L1425 67" stroke="#c87048" stroke-width="1.6"/>
<path d="M1419 78 H1417 V92 H1419 M1427 78 H1429 V84" stroke="#eee" fill="none"/><rect x="1419" y="80" width="5" height="4" fill="none" stroke="#5ab4f0"/><circle cx="1421.5" cy="87.5" r="2" fill="#aaa"/><path d="M1424 92 L1431 86" stroke="#f5c47a" stroke-width="3"/>
<rect x="1412" y="98" width="24" height="22" fill="#4f7cc0" stroke="#2a3a60"/><rect x="1413" y="99" width="22" height="10" fill="#6490d0"/><path d="M1418 101 H1416 V116 H1418" stroke="#eee" fill="none"/><rect x="1418" y="103" width="5" height="4" fill="none" stroke="#8fd08f"/><circle cx="1421" cy="110" r="2.5" fill="none" stroke="#8fd08f"/><path d="M1424 106 V117 L1427 114 L1430 118 L1431 117 L1428 113 H1432Z" fill="#f4f4f4"/>
<path d="M1461.5 60 V68 M1488.5 60 V68 M1463 64 H1487" stroke="#d6d6d6" stroke-width="1.2"/><path d="M1462 64 L1466 62 V66Z M1488 64 L1484 62 V66Z" fill="#d6d6d6"/><rect x="1461" y="70" width="28" height="6" fill="#f5c47a"/><path d="M1464 70 V72 M1467 70 V72 M1470 70 V72 M1473 70 V72 M1476 70 V72 M1479 70 V72 M1482 70 V72 M1485 70 V72" stroke="#8a6a3a" stroke-width="0.8"/>
<text x="1475" y="99" font-size="12" fill="#f0f0f0" text-anchor="middle">Measure</text>
<path d="M1471.5 104.2 H1477.5 L1474.5 107.8Z" fill="#f0f0f0"/>
<path d="M1513 57 V68 L1516 65 L1519 69 L1520 68 L1517.5 64 H1521Z" fill="#eee"/><path d="M1519 55 L1522 53 L1520 57 L1523 57" stroke="#f5c47a" stroke-width="1.5" fill="none"/><rect x="1520" y="60" width="9" height="9" fill="#f0f0f0"/><path d="M1522 62.5 H1527 M1522 65 H1527 M1522 67.5 H1527" stroke="#5a8ad0" stroke-width="0.9"/>
<rect x="1513.5" y="77.5" width="14" height="14" fill="none" stroke="#7fd0a0" stroke-dasharray="2 1"/><rect x="1515" y="80" width="7" height="10" fill="#80c8a0"/><rect x="1515" y="80" width="10" height="5" fill="#80c8a0"/><path d="M1522 83 V93 L1524.5 90.5 L1527 94 L1528 93 L1526 89.5 H1529Z" fill="#eee"/>
<rect x="1515" y="101" width="13" height="16" fill="#d6d6d6"/><rect x="1517" y="103" width="9" height="3" fill="#595959"/><g fill="#595959"><rect x="1517" y="108" width="2" height="2"/><rect x="1520.5" y="108" width="2" height="2"/><rect x="1524" y="108" width="2" height="2"/><rect x="1517" y="111.5" width="2" height="2"/><rect x="1520.5" y="111.5" width="2" height="2"/><rect x="1524" y="111.5" width="2" height="2"/></g>
<rect x="1550" y="55" width="22" height="25" fill="#e8a870"/><rect x="1556" y="52" width="10" height="4" fill="#f0f0f0"/><rect x="1558" y="62" width="18" height="22" fill="#d6d6d6"/><path d="M1571 62 L1576 67 H1571Z" fill="#f8f8f8"/>
<text x="1563.5" y="99" font-size="12" fill="#f0f0f0" text-anchor="middle">Paste</text>
<path d="M1560.5 104.2 H1566.5 L1563.5 107.8Z" fill="#f0f0f0"/>
<rect x="1593" y="53" width="12" height="14" fill="#cfcfcf"/><path d="M1595 57 H1601 M1595 60 H1600 M1595 63 H1599" stroke="#777"/><path d="M1600 59 L1607 67 M1609 59 L1602 67" stroke="#eee" stroke-width="1.1"/><circle cx="1601" cy="67.5" r="1.8" fill="none" stroke="#eee"/><circle cx="1607" cy="67.5" r="1.8" fill="none" stroke="#eee"/>
<path d="M1594 77.5 H1600 V91 H1594Z" fill="none" stroke="#d6d6d6" stroke-width="1.2"/><path d="M1597 80 H1604 L1607 83 V93 H1597Z" fill="#d6d6d6"/>
<path d="M1631 56 H1645 V66 H1663 V80 H1631Z" fill="#d6d6d6"/>
<text x="1647.5" y="99" font-size="12" fill="#f0f0f0" text-anchor="middle">Base</text>
<path d="M1644.5 104.2 H1650.5 L1647.5 107.8Z" fill="#f0f0f0"/>
<rect x="0.5" y="0.5" width="40" height="40" fill="url(#glogo)" stroke="#140a08"/>
<path d="M5 29 L13 3 H19 L27 29 H21.5 L19.5 22 H12.5 L10.5 29Z M13.8 17.5 H18.2 L16 10Z" fill="#c42a2a"/>
<path d="M6 27 Q12 20 20 21" stroke="#5a1010" stroke-width="0.8" fill="none"/>
<path d="M31 18 H38 L34.5 22Z" fill="#2a2a2a"/>
<path d="M50 6 H62 L66 10 V18 H50Z" fill="#f8f8f8"/><path d="M62 6 L66 10 H62Z" fill="#cfcfcf"/>
<path d="M74 8 H80 L82 10 H88 V12 H77 L74 18Z" fill="#eeeeee"/><path d="M77 12 H90 L87 19 H74Z" fill="#dcdcdc"/>
<path d="M98 4 H114 V20 H100 L98 18Z" fill="#d8d8d8"/><rect x="101.5" y="4" width="9" height="6" fill="#f8f8f8"/><rect x="101.5" y="15" width="9" height="5" fill="#f8f8f8"/>
<path d="M122 4 H138 V20 H124 L122 18Z" fill="#d8d8d8"/><rect x="125.5" y="4" width="9" height="6" fill="#f8f8f8"/><path d="M130 19 L137 12 L139 14 L132 21Z" fill="#f5c47a"/><path d="M136 12 L138 10 L140 12 L138 14Z" fill="#b87050"/>
<rect x="147" y="4" width="10" height="16" fill="#d8d8d8"/><rect x="148.5" y="5.5" width="7" height="11" fill="#666"/><path d="M154 15 H157 L158 14 H162 V20 H153Z" fill="#f5c47a"/>
<rect x="174" y="4" width="10" height="16" fill="#d8d8d8"/><rect x="175.5" y="5.5" width="7" height="11" fill="#666"/><path d="M172 10 H178 V8 L182 11 L178 14 V12 H172Z" fill="#6ab8f0"/>
<rect x="197" y="4" width="10" height="4" fill="#f8f8f8"/><path d="M194 8 H210 V16 H194Z" fill="#f8f8f8"/><rect x="198" y="14" width="8" height="5" fill="#6ab8f0" stroke="#f8f8f8"/>
<path d="M219 11.5 L224 8 V10 Q232 10 233 14 Q230 12.5 224 13 V15Z" fill="#bdbdbd"/><path d="M241 10.5 H246 L243.5 13Z" fill="#d8d8d8"/>
<path d="M269 11.5 L264 8 V10 Q256 10 254 14 Q258 12.5 264 13 V15Z" fill="#bdbdbd"/><path d="M277 10.5 H282 L279.5 13Z" fill="#d8d8d8"/>
<rect x="291" y="4" width="11" height="15" fill="#d8d8d8"/><rect x="293" y="6" width="7" height="4" fill="#6ab8f0"/><path d="M293 12 H298 M293 15 H296" stroke="#555"/><path d="M297 17 L302 12 L305 15 L300 20Z" fill="#f5c47a"/><path d="M302 12 L304.5 9.5 L307.5 12.5 L305 15Z" fill="#f4f4f4"/>
<rect x="317" y="4" width="10" height="4" fill="#f8f8f8"/><path d="M314 8 H328 V14 H314Z" fill="#f8f8f8"/><rect x="317" y="14" width="6" height="4" fill="#f8f8f8"/><path d="M321 16 H327 V14 L330 17 L327 20 V18 H321Z" fill="#6ab8f0"/>
<rect x="338" y="8" width="8" height="1.5" fill="#f8f8f8"/><path d="M337.5 11 H346.5 L342 16Z" fill="#f8f8f8"/>
<path d="M1314 7 L1318 11 L1314 15Z" fill="#f0f0f0"/><rect x="1310.5" y="0" width="14" height="24" fill="none" stroke="#9a9a9a"/>
<rect x="1325.5" y="1.5" width="178" height="21" fill="#8e8e8e" stroke="#5c5c5c"/>
<text x="1328" y="16" font-size="11" font-style="italic" fill="#d4d4d4">Type a keyword or phrase</text>
<g fill="#f0f0f0" stroke="#2a2a2a" stroke-width="1.2"><path d="M1510 8 H1514 V19 H1509 V12Z"/><path d="M1516 8 H1520 L1521 12 V19 H1516Z"/></g><rect x="1513" y="10" width="4" height="4" fill="#2a2a2a"/><g fill="#2a2a2a"><rect x="1510.5" y="5" width="3" height="4"/><rect x="1516.5" y="5" width="3" height="4"/></g>
<circle cx="1540" cy="9" r="3.5" fill="#f0f0f0" stroke="#222"/><path d="M1533.5 19 Q1534 13.5 1540 13.5 Q1546 13.5 1546.5 19Z" fill="#f0f0f0" stroke="#222"/>
<text x="1553" y="17" font-size="12" fill="#f4f4f4">Sign In</text>
<path d="M1637 11 H1643 L1640 14Z" fill="#eee"/>
<path d="M1655 7 H1658 L1660 15 H1668 L1670 9 H1659" stroke="#222" stroke-width="1.5" fill="none"/><circle cx="1661" cy="18" r="1.3" fill="#222"/><circle cx="1667" cy="18" r="1.3" fill="#222"/>
<path d="M1686 5 L1680 16 H1692Z" stroke="#222" stroke-width="1.6" fill="none"/><circle cx="1686" cy="5" r="1.8" fill="#f0f0f0" stroke="#222"/><circle cx="1680" cy="16" r="1.8" fill="#f0f0f0" stroke="#222"/><circle cx="1692" cy="16" r="1.8" fill="#f0f0f0" stroke="#222"/><path d="M1700 11 H1705 L1702.5 14Z" fill="#eee"/>
<circle cx="1731.5" cy="12" r="7.5" fill="#f0f0f0" stroke="#222" stroke-width="1.5"/><text x="1731.5" y="16.5" font-size="12" font-weight="bold" fill="#2a3a80" text-anchor="middle">?</text><path d="M1746 11 H1751 L1748.5 14Z" fill="#eee"/>
<path d="M1799 11.5 H1810" stroke="#f0f0f0" stroke-width="1"/>
<path d="M1846.5 9.5 H1854.5 V17.5 H1846.5Z M1848.5 9.5 V7.5 H1856.5 V15.5 H1854.5" stroke="#f0f0f0" stroke-width="1" fill="none"/>
<path d="M1891 7 L1901 17 M1901 7 L1891 17" stroke="#f0f0f0" stroke-width="1.1"/>
</svg>
</body></html>
